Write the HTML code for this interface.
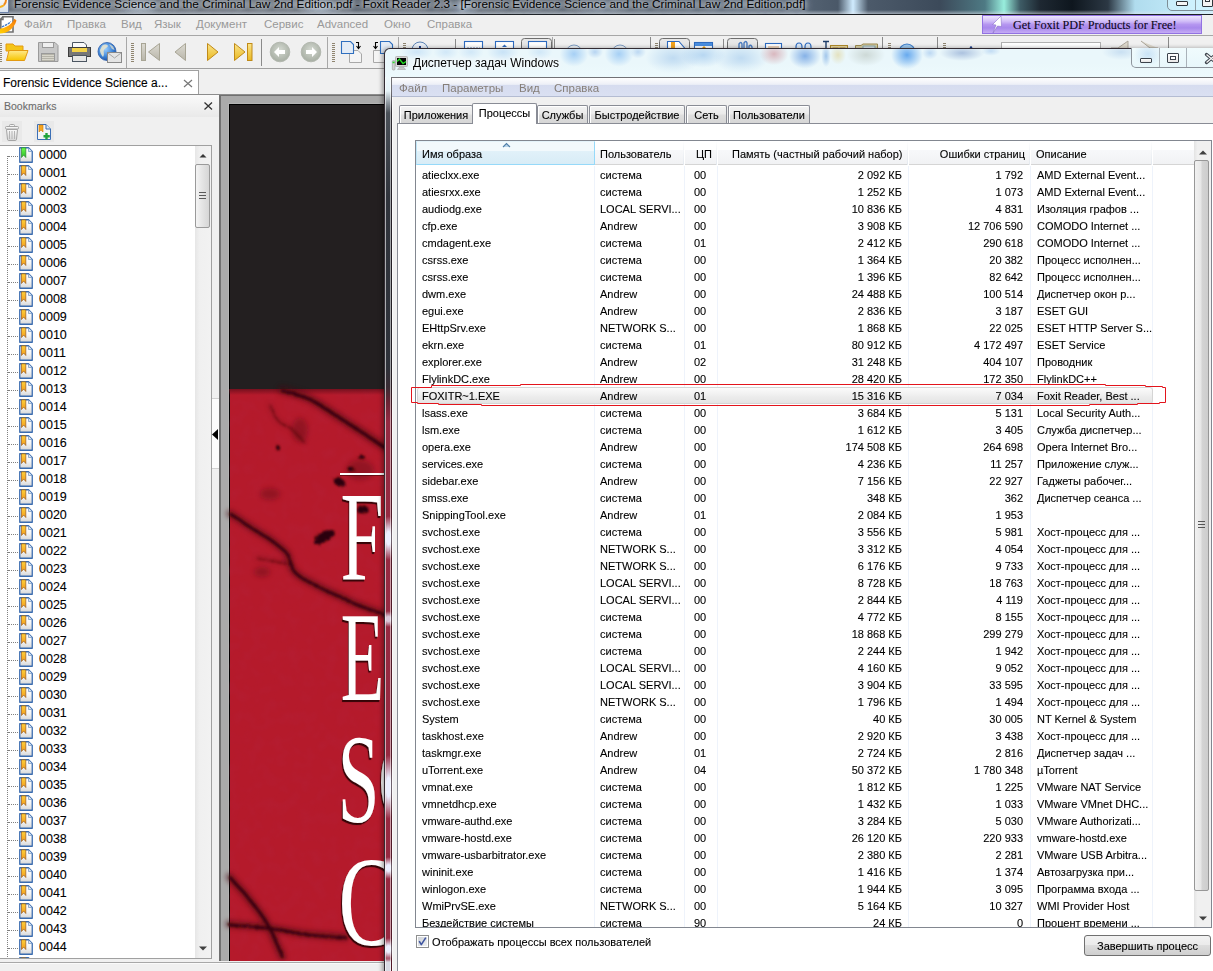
<!DOCTYPE html>
<html><head><meta charset="utf-8">
<style>
*{margin:0;padding:0;box-sizing:border-box}
html,body{width:1213px;height:971px;overflow:hidden;background:#f0f0f0;font-family:"Liberation Sans",sans-serif;color:#000}
.a{position:absolute}
.t{position:absolute;white-space:pre;line-height:1;-webkit-text-stroke:0.1px currentColor}
svg{position:absolute;overflow:visible}
</style></head><body>
<div class="a" style="left:0;top:0;width:1213px;height:15px;background:linear-gradient(90deg,#666e78 0.00%,#5e6670 24.73%,#56606c 49.46%,#566474 65.95%,#4a5868 69.08%,#d0ecff 70.32%,#4c5a6a 71.56%,#3c4a5a 77.49%,#4e7a84 81.20%,#98eedd 82.77%,#3e5c66 84.09%,#1e2832 85.74%,#0e161e 88.38%,#2c3844 91.34%,#b0dcee 93.57%,#cdf2ff 100.00%)"></div><div class="a" style="left:100px;top:-6px;width:80px;height:26px;background:radial-gradient(ellipse 24.0px 10px at center,rgba(215,235,255,.55),transparent)"></div><div class="a" style="left:280px;top:-6px;width:80px;height:26px;background:radial-gradient(ellipse 24.0px 10px at center,rgba(215,235,255,.6),transparent)"></div><div class="a" style="left:433px;top:-6px;width:60px;height:26px;background:radial-gradient(ellipse 18.0px 10px at center,rgba(200,225,250,.5),transparent)"></div><div class="a" style="left:550px;top:-6px;width:100px;height:26px;background:radial-gradient(ellipse 30.0px 10px at center,rgba(190,210,230,.35),transparent)"></div><div class="a" style="left:0;top:10px;width:1213px;height:4px;background:linear-gradient(180deg,rgba(255,255,255,0),rgba(225,232,240,.55))"></div><div class="a" style="left:0;top:14px;width:1213px;height:1px;background:#1c2024"></div><div class="a" style="left:0;top:0;width:9px;height:13px;background:linear-gradient(#f7f7f7,#d9e2ee);border-right:1px solid #6d82a8;border-bottom:1px solid #6d82a8"></div><div class="a" style="left:-2px;top:-4px;width:9px;height:12px;border-radius:0 0 8px 0;border-right:2px solid #f08a1c;border-bottom:2px solid #f5b020"></div><div class="a" style="left:1167px;top:-10px;width:60px;height:21px;border:1px solid #7e8e96;border-radius:0 0 0 5px;background:rgba(215,245,255,.5)"></div><div class="a" style="left:1195px;top:-10px;width:1px;height:20px;background:#8e9ea6"></div><div class="a" style="left:1176px;top:1px;width:12px;height:5px;border:1px solid #30363c;background:#f4f4f4;border-radius:1px"></div><div class="a" style="left:1202px;top:-4px;width:11px;height:11px;border:1px solid #30363c;background:#f4f4f4;border-radius:1px"></div><div class="a" style="left:1205px;top:-2px;width:5px;height:4px;border:1px solid #30363c"></div><div class="t" style="left:14px;top:-1px;font-size:11.8px;color:#000;-webkit-text-stroke:0;text-shadow:0 0 7px rgba(235,240,245,.9),0 0 4px rgba(235,240,245,.9),0 0 10px rgba(235,240,245,.7)">Forensic Evidence Science and the Criminal Law 2nd Edition.pdf - Foxit Reader 2.3 - [Forensic Evidence Science and the Criminal Law 2nd Edition.pdf]</div><div class="a" style="left:0;top:15px;width:1213px;height:20px;background:#f0f0f0"></div><svg style="left:0;top:15px" width="17" height="19" viewBox="0 15 17 19"><defs><linearGradient id="sw" x1="0" y1="1" x2="1" y2="0"><stop offset="0" stop-color="#ffd000"/><stop offset=".6" stop-color="#ff9a10"/><stop offset="1" stop-color="#f07800"/></linearGradient></defs><path d="M3 16.8 H13 V32 H0.8 V19 Z" fill="#fff" stroke="#727272" stroke-width="1.6"/><path d="M0 19.5 H3 V16" fill="none" stroke="#727272" stroke-width="1.4"/><path d="M0 33.5 C7 33.5 14 29 16.5 20.5 L14.5 18.8 C12 24 6.5 28 0 28.8 Z" fill="url(#sw)"/><path d="M2 26.8 C5 25.5 8 24.5 10.8 21.5" fill="none" stroke="#3c78c8" stroke-width="1.4" stroke-dasharray="2.5 .8"/></svg><div class="t" style="left:24px;top:19px;font-size:11.5px;color:#999;-webkit-text-stroke:0">Файл</div><div class="t" style="left:67px;top:19px;font-size:11.5px;color:#999;-webkit-text-stroke:0">Правка</div><div class="t" style="left:121px;top:19px;font-size:11.5px;color:#999;-webkit-text-stroke:0">Вид</div><div class="t" style="left:154px;top:19px;font-size:11.5px;color:#999;-webkit-text-stroke:0">Язык</div><div class="t" style="left:196px;top:19px;font-size:11.5px;color:#999;-webkit-text-stroke:0">Документ</div><div class="t" style="left:264px;top:19px;font-size:11.5px;color:#999;-webkit-text-stroke:0">Сервис</div><div class="t" style="left:317px;top:19px;font-size:11.5px;color:#999;-webkit-text-stroke:0">Advanced</div><div class="t" style="left:384px;top:19px;font-size:11.5px;color:#999;-webkit-text-stroke:0">Окно</div><div class="t" style="left:427px;top:19px;font-size:11.5px;color:#999;-webkit-text-stroke:0">Справка</div><div class="a" style="left:982px;top:15px;width:220px;height:19px;background:linear-gradient(180deg,#eee6fd 0%,#d2bff8 30%,#b596f0 50%,#a888ec 70%,#c4acf4 100%);border:1px solid #9272e2"></div><svg style="left:988px;top:15px" width="16" height="19"><path d="M13 1 L4.5 9.5 L8 10 L5 18 L9.5 11 L13.5 11.5 Z" fill="#fff" stroke="#7e64c0" stroke-width=".5"/></svg><div class="t" style="left:1013px;top:19px;font-family:'Liberation Serif',serif;font-size:12.2px;color:#0c0820">Get Foxit PDF Products for Free!</div><div class="a" style="left:0;top:35px;width:1213px;height:34px;background:#f0f0f0"></div><svg style="left:0;top:35px" width="1213" height="34" viewBox="0 35 1213 34"><defs><linearGradient id="gy" x1="0" y1="0" x2="0" y2="1"><stop offset="0" stop-color="#fbe48a"/><stop offset="1" stop-color="#e9b820"/></linearGradient><linearGradient id="gg" x1="0" y1="0" x2="0" y2="1"><stop offset="0" stop-color="#dcdad2"/><stop offset="1" stop-color="#b9b6aa"/></linearGradient><linearGradient id="gf" x1="0" y1="0" x2="0" y2="1"><stop offset="0" stop-color="#ffe98a"/><stop offset="1" stop-color="#f6c400"/></linearGradient><radialGradient id="gc" cx=".5" cy=".4" r=".6"><stop offset="0" stop-color="#d5dad2"/><stop offset="1" stop-color="#a6ada2"/></radialGradient><radialGradient id="gl" cx=".4" cy=".35" r=".7"><stop offset="0" stop-color="#9ed0ff"/><stop offset=".6" stop-color="#3f86d8"/><stop offset="1" stop-color="#1c4ea0"/></radialGradient><linearGradient id="pb" x1="0" y1="0" x2="0" y2="1"><stop offset="0" stop-color="#e9e9e9"/><stop offset="1" stop-color="#d2d2d2"/></linearGradient></defs><path d="M0 35.5 H1213" stroke="#a7a7a7"/><path d="M0 68.5 H1213" stroke="#a0a0a0"/><path d="M0 43.5 H2" stroke="#8f8570"/><path d="M0 45.5 H2" stroke="#8f8570"/><path d="M0 47.5 H2" stroke="#8f8570"/><path d="M0 49.5 H2" stroke="#8f8570"/><path d="M0 51.5 H2" stroke="#8f8570"/><path d="M0 53.5 H2" stroke="#8f8570"/><path d="M0 55.5 H2" stroke="#8f8570"/><path d="M0 57.5 H2" stroke="#8f8570"/><path d="M0 59.5 H2" stroke="#8f8570"/><path d="M0 61.5 H2" stroke="#8f8570"/><path d="M6 44 H13 L15 46 H23 V51 H6 Z" fill="#f5c518" stroke="#e39a12"/><path d="M6.5 60.5 L9 50.5 H28 L24.5 60.5 Z" fill="url(#gf)" stroke="#e39a12"/><path d="M38.5 42.5 H55 L58 45.5 V61.5 H38.5 Z" fill="#c8c8c8" stroke="#9a9a9a"/><rect x="42.5" y="42.5" width="11" height="5" fill="#efefef" stroke="#9a9a9a"/><rect x="41.5" y="53.5" width="13" height="8" fill="#b5b3a8" stroke="#9a9a9a"/><path d="M42 55.5 H54 M42 57.5 H54 M42 59.5 H54" stroke="#d8d6cc"/><path d="M72.5 42.5 H84 L86.5 45 V48.5 H72.5 Z" fill="#fafafa" stroke="#4c5662"/><rect x="68.5" y="47.5" width="22" height="9" fill="#777" stroke="#3e3e3e"/><rect x="72" y="48" width="15" height="4" fill="#f3d24a"/><rect x="72.5" y="55.5" width="14" height="6" fill="#e6e6e6" stroke="#4c5662"/><circle cx="107" cy="51.5" r="9" fill="url(#gl)" stroke="#2a5aa8" stroke-width=".8"/><path d="M102 46 C104 44 107 44 108 46 C107 48 105 48 104 50 C103 52 105 54 103 57 C101 55 100 52 100 50 Z" fill="#ece6cc" opacity=".85"/><path d="M109 44 C112 45 114 47 114.5 50 L112 49 Z" fill="#ece6cc" opacity=".7"/><rect x="107.5" y="52.5" width="14" height="10" fill="#e4e4e4" stroke="#8a8a8a"/><path d="M108 53 L114.5 58 L121 53" fill="none" stroke="#a8a8a8"/><path d="M126.5 37 V68" stroke="#a8a8a8"/><path d="M261.5 39 V66" stroke="#8a8a8a"/><path d="M327.5 37 V68" stroke="#a8a8a8"/><path d="M398.5 37 V68" stroke="#a8a8a8"/><path d="M455.5 39 V66" stroke="#8a8a8a"/><path d="M552.5 37 V68" stroke="#a8a8a8"/><path d="M554.5 39 V66" stroke="#8a8a8a"/><path d="M650.5 37 V68" stroke="#8a8a8a"/><path d="M723.5 39 V66" stroke="#8a8a8a"/><path d="M882.5 37 V68" stroke="#8a8a8a"/><path d="M937.5 37 V68" stroke="#8a8a8a"/><path d="M1168.5 37 V68" stroke="#8a8a8a"/><path d="M131 43.5 H134" stroke="#8f8570"/><path d="M131 45.5 H134" stroke="#8f8570"/><path d="M131 47.5 H134" stroke="#8f8570"/><path d="M131 49.5 H134" stroke="#8f8570"/><path d="M131 51.5 H134" stroke="#8f8570"/><path d="M131 53.5 H134" stroke="#8f8570"/><path d="M131 55.5 H134" stroke="#8f8570"/><path d="M131 57.5 H134" stroke="#8f8570"/><path d="M131 59.5 H134" stroke="#8f8570"/><path d="M131 61.5 H134" stroke="#8f8570"/><path d="M332 43.5 H335" stroke="#8f8570"/><path d="M332 45.5 H335" stroke="#8f8570"/><path d="M332 47.5 H335" stroke="#8f8570"/><path d="M332 49.5 H335" stroke="#8f8570"/><path d="M332 51.5 H335" stroke="#8f8570"/><path d="M332 53.5 H335" stroke="#8f8570"/><path d="M332 55.5 H335" stroke="#8f8570"/><path d="M332 57.5 H335" stroke="#8f8570"/><path d="M332 59.5 H335" stroke="#8f8570"/><path d="M332 61.5 H335" stroke="#8f8570"/><path d="M403 43.5 H406" stroke="#8f8570"/><path d="M403 45.5 H406" stroke="#8f8570"/><path d="M403 47.5 H406" stroke="#8f8570"/><path d="M403 49.5 H406" stroke="#8f8570"/><path d="M403 51.5 H406" stroke="#8f8570"/><path d="M403 53.5 H406" stroke="#8f8570"/><path d="M403 55.5 H406" stroke="#8f8570"/><path d="M403 57.5 H406" stroke="#8f8570"/><path d="M403 59.5 H406" stroke="#8f8570"/><path d="M403 61.5 H406" stroke="#8f8570"/><path d="M655 43.5 H658" stroke="#8f8570"/><path d="M655 45.5 H658" stroke="#8f8570"/><path d="M655 47.5 H658" stroke="#8f8570"/><path d="M655 49.5 H658" stroke="#8f8570"/><path d="M655 51.5 H658" stroke="#8f8570"/><path d="M655 53.5 H658" stroke="#8f8570"/><path d="M655 55.5 H658" stroke="#8f8570"/><path d="M655 57.5 H658" stroke="#8f8570"/><path d="M655 59.5 H658" stroke="#8f8570"/><path d="M655 61.5 H658" stroke="#8f8570"/><path d="M888 43.5 H891" stroke="#8f8570"/><path d="M888 45.5 H891" stroke="#8f8570"/><path d="M888 47.5 H891" stroke="#8f8570"/><path d="M888 49.5 H891" stroke="#8f8570"/><path d="M888 51.5 H891" stroke="#8f8570"/><path d="M888 53.5 H891" stroke="#8f8570"/><path d="M888 55.5 H891" stroke="#8f8570"/><path d="M888 57.5 H891" stroke="#8f8570"/><path d="M888 59.5 H891" stroke="#8f8570"/><path d="M888 61.5 H891" stroke="#8f8570"/><path d="M943 43.5 H946" stroke="#8f8570"/><path d="M943 45.5 H946" stroke="#8f8570"/><path d="M943 47.5 H946" stroke="#8f8570"/><path d="M943 49.5 H946" stroke="#8f8570"/><path d="M943 51.5 H946" stroke="#8f8570"/><path d="M943 53.5 H946" stroke="#8f8570"/><path d="M943 55.5 H946" stroke="#8f8570"/><path d="M943 57.5 H946" stroke="#8f8570"/><path d="M943 59.5 H946" stroke="#8f8570"/><path d="M943 61.5 H946" stroke="#8f8570"/><rect x="141.5" y="43.5" width="4" height="17" fill="url(#gg)" stroke="#a8a595"/><path d="M159.5 43.5 V60.5 L148.5 52 Z" fill="url(#gg)" stroke="#a8a595"/><path d="M185.5 43.5 V60.5 L175 52 Z" fill="url(#gg)" stroke="#a8a595"/><path d="M207.5 43.5 V60.5 L218 52 Z" fill="url(#gy)" stroke="#c08a18"/><path d="M234.5 43.5 V60.5 L245 52 Z" fill="url(#gy)" stroke="#c08a18"/><rect x="247.5" y="43.5" width="4.5" height="17" fill="url(#gy)" stroke="#c08a18"/><circle cx="280" cy="52" r="9.8" fill="url(#gc)" stroke="#b3b8af"/><path d="M274 52 L279 47 V50 H285 V54 H279 V57 Z" fill="#fff"/><circle cx="311" cy="52" r="9.8" fill="url(#gc)" stroke="#b3b8af"/><path d="M317 52 L312 47 V50 H306 V54 H312 V57 Z" fill="#fff"/><path d="M349.5 50.5 H358 L361.5 54 V62.5 H349.5 Z" fill="#f4f4f4" stroke="#a8a8a8"/><path d="M341.5 41.5 H350.5 L353.5 44.5 V53.5 H341.5 Z" fill="#e4ecf6" stroke="#2f6fbf" stroke-width="1.1"/><path d="M356 42.5 H358.5 V48 M356.5 46 L358.5 48.5 L360.5 46" fill="none" stroke="#000" stroke-width="1.1"/><path d="M373.5 50.5 H382 L385.5 54 V62.5 H373.5 Z" fill="#f4f4f4" stroke="#a8a8a8"/><path d="M380.5 41.5 H389.5 L392.5 44.5 V53.5 H380.5 Z" fill="#e4ecf6" stroke="#2f6fbf" stroke-width="1.1"/><path d="M378 42.5 H375.5 V48 M373.5 46 L375.5 48.5 L377.5 46" fill="none" stroke="#000" stroke-width="1.1"/><circle cx="420" cy="50" r="8" fill="#e8eef6" stroke="#5b82b4"/><rect x="419" y="46" width="2" height="3" fill="#1f3f8a"/><rect x="464.5" y="41.5" width="18" height="14" fill="#fff" stroke="#2e6bbf" stroke-width="1.1"/><path d="M467 48 H480" stroke="#6a8cc0" stroke-dasharray="2 1"/><rect x="495.5" y="41.5" width="18" height="14" fill="#fff" stroke="#2e6bbf" stroke-width="1.1"/><path d="M502 47 L504.5 44.5 L507 47 Z" fill="#2e6bbf"/><rect x="521.5" y="38.5" width="30" height="30" rx="3" fill="url(#pb)" stroke="#6e6e6e"/><rect x="659.5" y="38.5" width="30" height="30" rx="3" fill="url(#pb)" stroke="#6e6e6e"/><rect x="727.5" y="38.5" width="30" height="30" rx="3" fill="url(#pb)" stroke="#6e6e6e"/><rect x="528.5" y="41.5" width="18" height="14" fill="#fff" stroke="#2e6bbf" stroke-width="1.1"/><circle cx="574" cy="53" r="8" fill="#eef2f6" stroke="#7d9cc2"/><circle cx="620" cy="53" r="8" fill="#eef2f6" stroke="#7d9cc2"/><path d="M667.5 41.5 H679 L684.5 48 V56 H667.5 Z" fill="#fff" stroke="#2e6bbf" stroke-width="1.1"/><rect x="671" y="42" width="4" height="12" fill="#f2a11d"/><rect x="694.5" y="42.5" width="18" height="13" fill="#fff" stroke="#2e6bbf" stroke-width="1.1"/><rect x="695" y="43" width="17" height="3" fill="#4a8ee0"/><path d="M702 48 L704 46 L706 48 Z" fill="#e39a12"/><path d="M739 56 V44 Q741 41 742 44 V56 M744 56 V43 Q746 40 747 43 V56 M749 56 V46 Q751 44 752 47 V56" fill="none" stroke="#4b7cc0" stroke-width="1.4"/><rect x="765.5" y="43.5" width="16" height="11" fill="#fff" stroke="#2e6bbf" stroke-width="1.1"/><path d="M768 47 H779" stroke="#d9a77a"/><path d="M796 55 V47 Q796 43 799 43 Q802 43 802 47 V55 M805 55 V47 Q805 43 808 43 Q811 43 811 47 V55" fill="#dce8f6" stroke="#2e6bbf" stroke-width="1.2"/><path d="M823 41.5 H829 M826 41.5 V56" stroke="#1f3e6a" stroke-width="1.4"/><rect x="830.5" y="45.5" width="17" height="11" fill="#e8d8a4" stroke="#b08a2a"/><rect x="833" y="48" width="5" height="5" fill="none" stroke="#b08a2a"/><rect x="840" y="48" width="5" height="5" fill="none" stroke="#b08a2a"/><path d="M855.5 45.5 H861 L863 44 H877.5 V56 H855.5 Z" fill="#d8cfa8" stroke="#9c8a4e"/><rect x="863" y="46" width="12" height="7" fill="#dde4ec" stroke="#8aa"/><circle cx="907" cy="52" r="8" fill="#9cc8ee" stroke="#3d7cc8" stroke-width="1.2"/><circle cx="971" cy="47.5" r="1.2" fill="#1f3f8a"/><rect x="1001.5" y="42.5" width="99" height="20" fill="#fff" stroke="#b0b0b0"/><path d="M1111 48 H1118 L1128 41 V48" fill="#ddd8cc" stroke="#aaa59a"/><path d="M1141 41 L1150 48 H1158" fill="#ddd8cc" stroke="#aaa59a"/></svg><div class="a" style="left:0;top:69px;width:1213px;height:26px;background:#f0f0f0"></div><div class="a" style="left:-1px;top:70px;width:200px;height:25px;background:#fff;border:1px solid #a0a0a0;border-bottom:none"></div><div class="a" style="left:0;top:94px;width:1213px;height:1px;background:#8c8c8c"></div><div class="t" style="left:3px;top:77px;font-size:12px;color:#000">Forensic Evidence Science a...</div><svg style="left:183px;top:79px" width="10" height="9"><path d="M1 1 L9 8 M9 1 L1 8" stroke="#777" stroke-width="1.2"/></svg><div class="a" style="left:0;top:95px;width:220px;height:866px;background:#f0f0f0"></div><div class="a" style="left:0;top:95px;width:219px;height:22px;background:linear-gradient(#fafafa,#e9e9e9)"></div><div class="t" style="left:4px;top:101px;font-size:10.5px;color:#6d6d6d">Bookmarks</div><svg style="left:204px;top:102px" width="9" height="8"><path d="M.5 .5 L8 7.5 M8 .5 L.5 7.5" stroke="#333" stroke-width="1.3"/></svg><div class="a" style="left:2px;top:121px;width:20px;height:21px;background:#e9e9e9"></div><svg style="left:0;top:118px" width="24" height="26" viewBox="0 118 24 26"><defs><linearGradient id="tb" x1="0" y1="0" x2="0" y2="1"><stop offset="0" stop-color="#fafafa"/><stop offset="1" stop-color="#d4d4d4"/></linearGradient></defs><rect x="9.5" y="124.5" width="5" height="2.5" rx="1" fill="#f4f4f4" stroke="#a4a4a4"/><rect x="5.5" y="126.5" width="13" height="2.5" rx="1" fill="#f4f4f4" stroke="#a4a4a4"/><path d="M6.5 129.5 L7.5 139.5 Q7.7 140.5 8.7 140.5 H15.3 Q16.3 140.5 16.5 139.5 L17.5 129.5 Z" fill="url(#tb)" stroke="#a4a4a4"/><path d="M9.5 131 V139 M12 131 V139 M14.5 131 V139" stroke="#b4b4b4"/></svg><div class="a" style="left:34px;top:121px;width:20px;height:21px;background:#e9e9e9"></div><svg style="left:37px;top:124px" width="15" height="17"><path d="M.5 .5 H9 L13.5 5 V15.5 H.5 Z" fill="#f4f4f4" stroke="#3b6fb6"/><path d="M9 .5 V5 H13.5" fill="#dfe9f6" stroke="#3b6fb6"/><path d="M2 1 H6 V8 L4 6 L2 8 Z" fill="#f5a623" stroke="#d27c0c" stroke-width=".6"/><path d="M9.5 9 V15.5 M6.5 12.2 H12.8" stroke="#22a33b" stroke-width="2.4"/></svg><div class="a" style="left:0;top:145px;width:212px;height:814px;background:#fff;border:1px solid #a0a0a0;border-left:none"></div><div class="a" style="left:195px;top:146px;width:16px;height:812px;background:linear-gradient(90deg,#e6e6e6,#f0f0f0 30%,#f2f2f2)"></div><svg style="left:199px;top:153px" width="8" height="5"><path d="M.5 4.5 L4 1 L7.5 4.5 Z" fill="#383838"/></svg><svg style="left:199px;top:946px" width="8" height="5"><path d="M0 .5 L4 4.5 L8 .5 Z" fill="#404040"/></svg><div class="a" style="left:195px;top:164px;width:15px;height:64px;border:1px solid #9a9a9a;border-radius:2px;background:linear-gradient(90deg,#f4f4f4,#e4e4e4 50%,#d6d6d6)"></div><svg style="left:199px;top:192px" width="8" height="7"><path d="M0 .5 H7 M0 3.5 H7 M0 6.5 H7" stroke="#5a5a5a"/></svg><div class="a" style="left:0;top:146px;width:195px;height:812px;overflow:hidden"><div class="a" style="left:0;top:-146px;width:195px;height:1000px"><div class="t" style="left:39px;top:149px;font-size:12.5px;color:#000">0000</div><div class="t" style="left:39px;top:167px;font-size:12.5px;color:#000">0001</div><div class="t" style="left:39px;top:185px;font-size:12.5px;color:#000">0002</div><div class="t" style="left:39px;top:203px;font-size:12.5px;color:#000">0003</div><div class="t" style="left:39px;top:221px;font-size:12.5px;color:#000">0004</div><div class="t" style="left:39px;top:239px;font-size:12.5px;color:#000">0005</div><div class="t" style="left:39px;top:257px;font-size:12.5px;color:#000">0006</div><div class="t" style="left:39px;top:275px;font-size:12.5px;color:#000">0007</div><div class="t" style="left:39px;top:293px;font-size:12.5px;color:#000">0008</div><div class="t" style="left:39px;top:311px;font-size:12.5px;color:#000">0009</div><div class="t" style="left:39px;top:329px;font-size:12.5px;color:#000">0010</div><div class="t" style="left:39px;top:347px;font-size:12.5px;color:#000">0011</div><div class="t" style="left:39px;top:365px;font-size:12.5px;color:#000">0012</div><div class="t" style="left:39px;top:383px;font-size:12.5px;color:#000">0013</div><div class="t" style="left:39px;top:401px;font-size:12.5px;color:#000">0014</div><div class="t" style="left:39px;top:419px;font-size:12.5px;color:#000">0015</div><div class="t" style="left:39px;top:437px;font-size:12.5px;color:#000">0016</div><div class="t" style="left:39px;top:455px;font-size:12.5px;color:#000">0017</div><div class="t" style="left:39px;top:473px;font-size:12.5px;color:#000">0018</div><div class="t" style="left:39px;top:491px;font-size:12.5px;color:#000">0019</div><div class="t" style="left:39px;top:509px;font-size:12.5px;color:#000">0020</div><div class="t" style="left:39px;top:527px;font-size:12.5px;color:#000">0021</div><div class="t" style="left:39px;top:545px;font-size:12.5px;color:#000">0022</div><div class="t" style="left:39px;top:563px;font-size:12.5px;color:#000">0023</div><div class="t" style="left:39px;top:581px;font-size:12.5px;color:#000">0024</div><div class="t" style="left:39px;top:599px;font-size:12.5px;color:#000">0025</div><div class="t" style="left:39px;top:617px;font-size:12.5px;color:#000">0026</div><div class="t" style="left:39px;top:635px;font-size:12.5px;color:#000">0027</div><div class="t" style="left:39px;top:653px;font-size:12.5px;color:#000">0028</div><div class="t" style="left:39px;top:671px;font-size:12.5px;color:#000">0029</div><div class="t" style="left:39px;top:689px;font-size:12.5px;color:#000">0030</div><div class="t" style="left:39px;top:707px;font-size:12.5px;color:#000">0031</div><div class="t" style="left:39px;top:725px;font-size:12.5px;color:#000">0032</div><div class="t" style="left:39px;top:743px;font-size:12.5px;color:#000">0033</div><div class="t" style="left:39px;top:761px;font-size:12.5px;color:#000">0034</div><div class="t" style="left:39px;top:779px;font-size:12.5px;color:#000">0035</div><div class="t" style="left:39px;top:797px;font-size:12.5px;color:#000">0036</div><div class="t" style="left:39px;top:815px;font-size:12.5px;color:#000">0037</div><div class="t" style="left:39px;top:833px;font-size:12.5px;color:#000">0038</div><div class="t" style="left:39px;top:851px;font-size:12.5px;color:#000">0039</div><div class="t" style="left:39px;top:869px;font-size:12.5px;color:#000">0040</div><div class="t" style="left:39px;top:887px;font-size:12.5px;color:#000">0041</div><div class="t" style="left:39px;top:905px;font-size:12.5px;color:#000">0042</div><div class="t" style="left:39px;top:923px;font-size:12.5px;color:#000">0043</div><div class="t" style="left:39px;top:941px;font-size:12.5px;color:#000">0044</div><div class="t" style="left:39px;top:959px;font-size:12.5px;color:#000">0045</div><div class="a" style="left:7px;top:156px;width:0;height:803px;border-left:1px dotted #808080"></div><svg style="left:0;top:0" width="0" height="0"><defs><linearGradient id="pg" x1="0" y1="0" x2="0" y2="1"><stop offset="0" stop-color="#fff"/><stop offset=".5" stop-color="#f6f6f6"/><stop offset="1" stop-color="#d6d6d6"/></linearGradient><linearGradient id="fo" x1="0" y1="0" x2="0" y2="1"><stop offset="0" stop-color="#ffd23a"/><stop offset="1" stop-color="#f39a1a"/></linearGradient><linearGradient id="fg" x1="0" y1="0" x2="0" y2="1"><stop offset="0" stop-color="#6cff4a"/><stop offset="1" stop-color="#2cb82c"/></linearGradient></defs></svg><div class="a" style="left:8px;top:156px;width:10px;height:0;border-top:1px dotted #808080"></div><svg style="left:19px;top:147px" width="15" height="16"><path d="M.75 .75 H9.5 L13.25 4.5 V15.25 H.75 Z" fill="url(#pg)" stroke="#3a6cb0" stroke-width="1.3" stroke-linejoin="round"/><path d="M9.5 1 V4.5 H13" fill="#dfe8f4" stroke="#7a9cc8" stroke-width=".8"/><path d="M2.5 .8 H6.8 V10.5 L4.65 8 L2.5 10.5 Z" fill="url(#fg)" stroke="#2a8a2a" stroke-width=".7"/></svg><div class="a" style="left:8px;top:174px;width:10px;height:0;border-top:1px dotted #808080"></div><svg style="left:19px;top:165px" width="15" height="16"><path d="M.75 .75 H9.5 L13.25 4.5 V15.25 H.75 Z" fill="url(#pg)" stroke="#3a6cb0" stroke-width="1.3" stroke-linejoin="round"/><path d="M9.5 1 V4.5 H13" fill="#dfe8f4" stroke="#7a9cc8" stroke-width=".8"/><path d="M2.5 .8 H6.8 V10.5 L4.65 8 L2.5 10.5 Z" fill="url(#fo)" stroke="#9a5a18" stroke-width=".7"/></svg><div class="a" style="left:8px;top:192px;width:10px;height:0;border-top:1px dotted #808080"></div><svg style="left:19px;top:183px" width="15" height="16"><path d="M.75 .75 H9.5 L13.25 4.5 V15.25 H.75 Z" fill="url(#pg)" stroke="#3a6cb0" stroke-width="1.3" stroke-linejoin="round"/><path d="M9.5 1 V4.5 H13" fill="#dfe8f4" stroke="#7a9cc8" stroke-width=".8"/><path d="M2.5 .8 H6.8 V10.5 L4.65 8 L2.5 10.5 Z" fill="url(#fo)" stroke="#9a5a18" stroke-width=".7"/></svg><div class="a" style="left:8px;top:210px;width:10px;height:0;border-top:1px dotted #808080"></div><svg style="left:19px;top:201px" width="15" height="16"><path d="M.75 .75 H9.5 L13.25 4.5 V15.25 H.75 Z" fill="url(#pg)" stroke="#3a6cb0" stroke-width="1.3" stroke-linejoin="round"/><path d="M9.5 1 V4.5 H13" fill="#dfe8f4" stroke="#7a9cc8" stroke-width=".8"/><path d="M2.5 .8 H6.8 V10.5 L4.65 8 L2.5 10.5 Z" fill="url(#fo)" stroke="#9a5a18" stroke-width=".7"/></svg><div class="a" style="left:8px;top:228px;width:10px;height:0;border-top:1px dotted #808080"></div><svg style="left:19px;top:219px" width="15" height="16"><path d="M.75 .75 H9.5 L13.25 4.5 V15.25 H.75 Z" fill="url(#pg)" stroke="#3a6cb0" stroke-width="1.3" stroke-linejoin="round"/><path d="M9.5 1 V4.5 H13" fill="#dfe8f4" stroke="#7a9cc8" stroke-width=".8"/><path d="M2.5 .8 H6.8 V10.5 L4.65 8 L2.5 10.5 Z" fill="url(#fo)" stroke="#9a5a18" stroke-width=".7"/></svg><div class="a" style="left:8px;top:246px;width:10px;height:0;border-top:1px dotted #808080"></div><svg style="left:19px;top:237px" width="15" height="16"><path d="M.75 .75 H9.5 L13.25 4.5 V15.25 H.75 Z" fill="url(#pg)" stroke="#3a6cb0" stroke-width="1.3" stroke-linejoin="round"/><path d="M9.5 1 V4.5 H13" fill="#dfe8f4" stroke="#7a9cc8" stroke-width=".8"/><path d="M2.5 .8 H6.8 V10.5 L4.65 8 L2.5 10.5 Z" fill="url(#fo)" stroke="#9a5a18" stroke-width=".7"/></svg><div class="a" style="left:8px;top:264px;width:10px;height:0;border-top:1px dotted #808080"></div><svg style="left:19px;top:255px" width="15" height="16"><path d="M.75 .75 H9.5 L13.25 4.5 V15.25 H.75 Z" fill="url(#pg)" stroke="#3a6cb0" stroke-width="1.3" stroke-linejoin="round"/><path d="M9.5 1 V4.5 H13" fill="#dfe8f4" stroke="#7a9cc8" stroke-width=".8"/><path d="M2.5 .8 H6.8 V10.5 L4.65 8 L2.5 10.5 Z" fill="url(#fo)" stroke="#9a5a18" stroke-width=".7"/></svg><div class="a" style="left:8px;top:282px;width:10px;height:0;border-top:1px dotted #808080"></div><svg style="left:19px;top:273px" width="15" height="16"><path d="M.75 .75 H9.5 L13.25 4.5 V15.25 H.75 Z" fill="url(#pg)" stroke="#3a6cb0" stroke-width="1.3" stroke-linejoin="round"/><path d="M9.5 1 V4.5 H13" fill="#dfe8f4" stroke="#7a9cc8" stroke-width=".8"/><path d="M2.5 .8 H6.8 V10.5 L4.65 8 L2.5 10.5 Z" fill="url(#fo)" stroke="#9a5a18" stroke-width=".7"/></svg><div class="a" style="left:8px;top:300px;width:10px;height:0;border-top:1px dotted #808080"></div><svg style="left:19px;top:291px" width="15" height="16"><path d="M.75 .75 H9.5 L13.25 4.5 V15.25 H.75 Z" fill="url(#pg)" stroke="#3a6cb0" stroke-width="1.3" stroke-linejoin="round"/><path d="M9.5 1 V4.5 H13" fill="#dfe8f4" stroke="#7a9cc8" stroke-width=".8"/><path d="M2.5 .8 H6.8 V10.5 L4.65 8 L2.5 10.5 Z" fill="url(#fo)" stroke="#9a5a18" stroke-width=".7"/></svg><div class="a" style="left:8px;top:318px;width:10px;height:0;border-top:1px dotted #808080"></div><svg style="left:19px;top:309px" width="15" height="16"><path d="M.75 .75 H9.5 L13.25 4.5 V15.25 H.75 Z" fill="url(#pg)" stroke="#3a6cb0" stroke-width="1.3" stroke-linejoin="round"/><path d="M9.5 1 V4.5 H13" fill="#dfe8f4" stroke="#7a9cc8" stroke-width=".8"/><path d="M2.5 .8 H6.8 V10.5 L4.65 8 L2.5 10.5 Z" fill="url(#fo)" stroke="#9a5a18" stroke-width=".7"/></svg><div class="a" style="left:8px;top:336px;width:10px;height:0;border-top:1px dotted #808080"></div><svg style="left:19px;top:327px" width="15" height="16"><path d="M.75 .75 H9.5 L13.25 4.5 V15.25 H.75 Z" fill="url(#pg)" stroke="#3a6cb0" stroke-width="1.3" stroke-linejoin="round"/><path d="M9.5 1 V4.5 H13" fill="#dfe8f4" stroke="#7a9cc8" stroke-width=".8"/><path d="M2.5 .8 H6.8 V10.5 L4.65 8 L2.5 10.5 Z" fill="url(#fo)" stroke="#9a5a18" stroke-width=".7"/></svg><div class="a" style="left:8px;top:354px;width:10px;height:0;border-top:1px dotted #808080"></div><svg style="left:19px;top:345px" width="15" height="16"><path d="M.75 .75 H9.5 L13.25 4.5 V15.25 H.75 Z" fill="url(#pg)" stroke="#3a6cb0" stroke-width="1.3" stroke-linejoin="round"/><path d="M9.5 1 V4.5 H13" fill="#dfe8f4" stroke="#7a9cc8" stroke-width=".8"/><path d="M2.5 .8 H6.8 V10.5 L4.65 8 L2.5 10.5 Z" fill="url(#fo)" stroke="#9a5a18" stroke-width=".7"/></svg><div class="a" style="left:8px;top:372px;width:10px;height:0;border-top:1px dotted #808080"></div><svg style="left:19px;top:363px" width="15" height="16"><path d="M.75 .75 H9.5 L13.25 4.5 V15.25 H.75 Z" fill="url(#pg)" stroke="#3a6cb0" stroke-width="1.3" stroke-linejoin="round"/><path d="M9.5 1 V4.5 H13" fill="#dfe8f4" stroke="#7a9cc8" stroke-width=".8"/><path d="M2.5 .8 H6.8 V10.5 L4.65 8 L2.5 10.5 Z" fill="url(#fo)" stroke="#9a5a18" stroke-width=".7"/></svg><div class="a" style="left:8px;top:390px;width:10px;height:0;border-top:1px dotted #808080"></div><svg style="left:19px;top:381px" width="15" height="16"><path d="M.75 .75 H9.5 L13.25 4.5 V15.25 H.75 Z" fill="url(#pg)" stroke="#3a6cb0" stroke-width="1.3" stroke-linejoin="round"/><path d="M9.5 1 V4.5 H13" fill="#dfe8f4" stroke="#7a9cc8" stroke-width=".8"/><path d="M2.5 .8 H6.8 V10.5 L4.65 8 L2.5 10.5 Z" fill="url(#fo)" stroke="#9a5a18" stroke-width=".7"/></svg><div class="a" style="left:8px;top:408px;width:10px;height:0;border-top:1px dotted #808080"></div><svg style="left:19px;top:399px" width="15" height="16"><path d="M.75 .75 H9.5 L13.25 4.5 V15.25 H.75 Z" fill="url(#pg)" stroke="#3a6cb0" stroke-width="1.3" stroke-linejoin="round"/><path d="M9.5 1 V4.5 H13" fill="#dfe8f4" stroke="#7a9cc8" stroke-width=".8"/><path d="M2.5 .8 H6.8 V10.5 L4.65 8 L2.5 10.5 Z" fill="url(#fo)" stroke="#9a5a18" stroke-width=".7"/></svg><div class="a" style="left:8px;top:426px;width:10px;height:0;border-top:1px dotted #808080"></div><svg style="left:19px;top:417px" width="15" height="16"><path d="M.75 .75 H9.5 L13.25 4.5 V15.25 H.75 Z" fill="url(#pg)" stroke="#3a6cb0" stroke-width="1.3" stroke-linejoin="round"/><path d="M9.5 1 V4.5 H13" fill="#dfe8f4" stroke="#7a9cc8" stroke-width=".8"/><path d="M2.5 .8 H6.8 V10.5 L4.65 8 L2.5 10.5 Z" fill="url(#fo)" stroke="#9a5a18" stroke-width=".7"/></svg><div class="a" style="left:8px;top:444px;width:10px;height:0;border-top:1px dotted #808080"></div><svg style="left:19px;top:435px" width="15" height="16"><path d="M.75 .75 H9.5 L13.25 4.5 V15.25 H.75 Z" fill="url(#pg)" stroke="#3a6cb0" stroke-width="1.3" stroke-linejoin="round"/><path d="M9.5 1 V4.5 H13" fill="#dfe8f4" stroke="#7a9cc8" stroke-width=".8"/><path d="M2.5 .8 H6.8 V10.5 L4.65 8 L2.5 10.5 Z" fill="url(#fo)" stroke="#9a5a18" stroke-width=".7"/></svg><div class="a" style="left:8px;top:462px;width:10px;height:0;border-top:1px dotted #808080"></div><svg style="left:19px;top:453px" width="15" height="16"><path d="M.75 .75 H9.5 L13.25 4.5 V15.25 H.75 Z" fill="url(#pg)" stroke="#3a6cb0" stroke-width="1.3" stroke-linejoin="round"/><path d="M9.5 1 V4.5 H13" fill="#dfe8f4" stroke="#7a9cc8" stroke-width=".8"/><path d="M2.5 .8 H6.8 V10.5 L4.65 8 L2.5 10.5 Z" fill="url(#fo)" stroke="#9a5a18" stroke-width=".7"/></svg><div class="a" style="left:8px;top:480px;width:10px;height:0;border-top:1px dotted #808080"></div><svg style="left:19px;top:471px" width="15" height="16"><path d="M.75 .75 H9.5 L13.25 4.5 V15.25 H.75 Z" fill="url(#pg)" stroke="#3a6cb0" stroke-width="1.3" stroke-linejoin="round"/><path d="M9.5 1 V4.5 H13" fill="#dfe8f4" stroke="#7a9cc8" stroke-width=".8"/><path d="M2.5 .8 H6.8 V10.5 L4.65 8 L2.5 10.5 Z" fill="url(#fo)" stroke="#9a5a18" stroke-width=".7"/></svg><div class="a" style="left:8px;top:498px;width:10px;height:0;border-top:1px dotted #808080"></div><svg style="left:19px;top:489px" width="15" height="16"><path d="M.75 .75 H9.5 L13.25 4.5 V15.25 H.75 Z" fill="url(#pg)" stroke="#3a6cb0" stroke-width="1.3" stroke-linejoin="round"/><path d="M9.5 1 V4.5 H13" fill="#dfe8f4" stroke="#7a9cc8" stroke-width=".8"/><path d="M2.5 .8 H6.8 V10.5 L4.65 8 L2.5 10.5 Z" fill="url(#fo)" stroke="#9a5a18" stroke-width=".7"/></svg><div class="a" style="left:8px;top:516px;width:10px;height:0;border-top:1px dotted #808080"></div><svg style="left:19px;top:507px" width="15" height="16"><path d="M.75 .75 H9.5 L13.25 4.5 V15.25 H.75 Z" fill="url(#pg)" stroke="#3a6cb0" stroke-width="1.3" stroke-linejoin="round"/><path d="M9.5 1 V4.5 H13" fill="#dfe8f4" stroke="#7a9cc8" stroke-width=".8"/><path d="M2.5 .8 H6.8 V10.5 L4.65 8 L2.5 10.5 Z" fill="url(#fo)" stroke="#9a5a18" stroke-width=".7"/></svg><div class="a" style="left:8px;top:534px;width:10px;height:0;border-top:1px dotted #808080"></div><svg style="left:19px;top:525px" width="15" height="16"><path d="M.75 .75 H9.5 L13.25 4.5 V15.25 H.75 Z" fill="url(#pg)" stroke="#3a6cb0" stroke-width="1.3" stroke-linejoin="round"/><path d="M9.5 1 V4.5 H13" fill="#dfe8f4" stroke="#7a9cc8" stroke-width=".8"/><path d="M2.5 .8 H6.8 V10.5 L4.65 8 L2.5 10.5 Z" fill="url(#fo)" stroke="#9a5a18" stroke-width=".7"/></svg><div class="a" style="left:8px;top:552px;width:10px;height:0;border-top:1px dotted #808080"></div><svg style="left:19px;top:543px" width="15" height="16"><path d="M.75 .75 H9.5 L13.25 4.5 V15.25 H.75 Z" fill="url(#pg)" stroke="#3a6cb0" stroke-width="1.3" stroke-linejoin="round"/><path d="M9.5 1 V4.5 H13" fill="#dfe8f4" stroke="#7a9cc8" stroke-width=".8"/><path d="M2.5 .8 H6.8 V10.5 L4.65 8 L2.5 10.5 Z" fill="url(#fo)" stroke="#9a5a18" stroke-width=".7"/></svg><div class="a" style="left:8px;top:570px;width:10px;height:0;border-top:1px dotted #808080"></div><svg style="left:19px;top:561px" width="15" height="16"><path d="M.75 .75 H9.5 L13.25 4.5 V15.25 H.75 Z" fill="url(#pg)" stroke="#3a6cb0" stroke-width="1.3" stroke-linejoin="round"/><path d="M9.5 1 V4.5 H13" fill="#dfe8f4" stroke="#7a9cc8" stroke-width=".8"/><path d="M2.5 .8 H6.8 V10.5 L4.65 8 L2.5 10.5 Z" fill="url(#fo)" stroke="#9a5a18" stroke-width=".7"/></svg><div class="a" style="left:8px;top:588px;width:10px;height:0;border-top:1px dotted #808080"></div><svg style="left:19px;top:579px" width="15" height="16"><path d="M.75 .75 H9.5 L13.25 4.5 V15.25 H.75 Z" fill="url(#pg)" stroke="#3a6cb0" stroke-width="1.3" stroke-linejoin="round"/><path d="M9.5 1 V4.5 H13" fill="#dfe8f4" stroke="#7a9cc8" stroke-width=".8"/><path d="M2.5 .8 H6.8 V10.5 L4.65 8 L2.5 10.5 Z" fill="url(#fo)" stroke="#9a5a18" stroke-width=".7"/></svg><div class="a" style="left:8px;top:606px;width:10px;height:0;border-top:1px dotted #808080"></div><svg style="left:19px;top:597px" width="15" height="16"><path d="M.75 .75 H9.5 L13.25 4.5 V15.25 H.75 Z" fill="url(#pg)" stroke="#3a6cb0" stroke-width="1.3" stroke-linejoin="round"/><path d="M9.5 1 V4.5 H13" fill="#dfe8f4" stroke="#7a9cc8" stroke-width=".8"/><path d="M2.5 .8 H6.8 V10.5 L4.65 8 L2.5 10.5 Z" fill="url(#fo)" stroke="#9a5a18" stroke-width=".7"/></svg><div class="a" style="left:8px;top:624px;width:10px;height:0;border-top:1px dotted #808080"></div><svg style="left:19px;top:615px" width="15" height="16"><path d="M.75 .75 H9.5 L13.25 4.5 V15.25 H.75 Z" fill="url(#pg)" stroke="#3a6cb0" stroke-width="1.3" stroke-linejoin="round"/><path d="M9.5 1 V4.5 H13" fill="#dfe8f4" stroke="#7a9cc8" stroke-width=".8"/><path d="M2.5 .8 H6.8 V10.5 L4.65 8 L2.5 10.5 Z" fill="url(#fo)" stroke="#9a5a18" stroke-width=".7"/></svg><div class="a" style="left:8px;top:642px;width:10px;height:0;border-top:1px dotted #808080"></div><svg style="left:19px;top:633px" width="15" height="16"><path d="M.75 .75 H9.5 L13.25 4.5 V15.25 H.75 Z" fill="url(#pg)" stroke="#3a6cb0" stroke-width="1.3" stroke-linejoin="round"/><path d="M9.5 1 V4.5 H13" fill="#dfe8f4" stroke="#7a9cc8" stroke-width=".8"/><path d="M2.5 .8 H6.8 V10.5 L4.65 8 L2.5 10.5 Z" fill="url(#fo)" stroke="#9a5a18" stroke-width=".7"/></svg><div class="a" style="left:8px;top:660px;width:10px;height:0;border-top:1px dotted #808080"></div><svg style="left:19px;top:651px" width="15" height="16"><path d="M.75 .75 H9.5 L13.25 4.5 V15.25 H.75 Z" fill="url(#pg)" stroke="#3a6cb0" stroke-width="1.3" stroke-linejoin="round"/><path d="M9.5 1 V4.5 H13" fill="#dfe8f4" stroke="#7a9cc8" stroke-width=".8"/><path d="M2.5 .8 H6.8 V10.5 L4.65 8 L2.5 10.5 Z" fill="url(#fo)" stroke="#9a5a18" stroke-width=".7"/></svg><div class="a" style="left:8px;top:678px;width:10px;height:0;border-top:1px dotted #808080"></div><svg style="left:19px;top:669px" width="15" height="16"><path d="M.75 .75 H9.5 L13.25 4.5 V15.25 H.75 Z" fill="url(#pg)" stroke="#3a6cb0" stroke-width="1.3" stroke-linejoin="round"/><path d="M9.5 1 V4.5 H13" fill="#dfe8f4" stroke="#7a9cc8" stroke-width=".8"/><path d="M2.5 .8 H6.8 V10.5 L4.65 8 L2.5 10.5 Z" fill="url(#fo)" stroke="#9a5a18" stroke-width=".7"/></svg><div class="a" style="left:8px;top:696px;width:10px;height:0;border-top:1px dotted #808080"></div><svg style="left:19px;top:687px" width="15" height="16"><path d="M.75 .75 H9.5 L13.25 4.5 V15.25 H.75 Z" fill="url(#pg)" stroke="#3a6cb0" stroke-width="1.3" stroke-linejoin="round"/><path d="M9.5 1 V4.5 H13" fill="#dfe8f4" stroke="#7a9cc8" stroke-width=".8"/><path d="M2.5 .8 H6.8 V10.5 L4.65 8 L2.5 10.5 Z" fill="url(#fo)" stroke="#9a5a18" stroke-width=".7"/></svg><div class="a" style="left:8px;top:714px;width:10px;height:0;border-top:1px dotted #808080"></div><svg style="left:19px;top:705px" width="15" height="16"><path d="M.75 .75 H9.5 L13.25 4.5 V15.25 H.75 Z" fill="url(#pg)" stroke="#3a6cb0" stroke-width="1.3" stroke-linejoin="round"/><path d="M9.5 1 V4.5 H13" fill="#dfe8f4" stroke="#7a9cc8" stroke-width=".8"/><path d="M2.5 .8 H6.8 V10.5 L4.65 8 L2.5 10.5 Z" fill="url(#fo)" stroke="#9a5a18" stroke-width=".7"/></svg><div class="a" style="left:8px;top:732px;width:10px;height:0;border-top:1px dotted #808080"></div><svg style="left:19px;top:723px" width="15" height="16"><path d="M.75 .75 H9.5 L13.25 4.5 V15.25 H.75 Z" fill="url(#pg)" stroke="#3a6cb0" stroke-width="1.3" stroke-linejoin="round"/><path d="M9.5 1 V4.5 H13" fill="#dfe8f4" stroke="#7a9cc8" stroke-width=".8"/><path d="M2.5 .8 H6.8 V10.5 L4.65 8 L2.5 10.5 Z" fill="url(#fo)" stroke="#9a5a18" stroke-width=".7"/></svg><div class="a" style="left:8px;top:750px;width:10px;height:0;border-top:1px dotted #808080"></div><svg style="left:19px;top:741px" width="15" height="16"><path d="M.75 .75 H9.5 L13.25 4.5 V15.25 H.75 Z" fill="url(#pg)" stroke="#3a6cb0" stroke-width="1.3" stroke-linejoin="round"/><path d="M9.5 1 V4.5 H13" fill="#dfe8f4" stroke="#7a9cc8" stroke-width=".8"/><path d="M2.5 .8 H6.8 V10.5 L4.65 8 L2.5 10.5 Z" fill="url(#fo)" stroke="#9a5a18" stroke-width=".7"/></svg><div class="a" style="left:8px;top:768px;width:10px;height:0;border-top:1px dotted #808080"></div><svg style="left:19px;top:759px" width="15" height="16"><path d="M.75 .75 H9.5 L13.25 4.5 V15.25 H.75 Z" fill="url(#pg)" stroke="#3a6cb0" stroke-width="1.3" stroke-linejoin="round"/><path d="M9.5 1 V4.5 H13" fill="#dfe8f4" stroke="#7a9cc8" stroke-width=".8"/><path d="M2.5 .8 H6.8 V10.5 L4.65 8 L2.5 10.5 Z" fill="url(#fo)" stroke="#9a5a18" stroke-width=".7"/></svg><div class="a" style="left:8px;top:786px;width:10px;height:0;border-top:1px dotted #808080"></div><svg style="left:19px;top:777px" width="15" height="16"><path d="M.75 .75 H9.5 L13.25 4.5 V15.25 H.75 Z" fill="url(#pg)" stroke="#3a6cb0" stroke-width="1.3" stroke-linejoin="round"/><path d="M9.5 1 V4.5 H13" fill="#dfe8f4" stroke="#7a9cc8" stroke-width=".8"/><path d="M2.5 .8 H6.8 V10.5 L4.65 8 L2.5 10.5 Z" fill="url(#fo)" stroke="#9a5a18" stroke-width=".7"/></svg><div class="a" style="left:8px;top:804px;width:10px;height:0;border-top:1px dotted #808080"></div><svg style="left:19px;top:795px" width="15" height="16"><path d="M.75 .75 H9.5 L13.25 4.5 V15.25 H.75 Z" fill="url(#pg)" stroke="#3a6cb0" stroke-width="1.3" stroke-linejoin="round"/><path d="M9.5 1 V4.5 H13" fill="#dfe8f4" stroke="#7a9cc8" stroke-width=".8"/><path d="M2.5 .8 H6.8 V10.5 L4.65 8 L2.5 10.5 Z" fill="url(#fo)" stroke="#9a5a18" stroke-width=".7"/></svg><div class="a" style="left:8px;top:822px;width:10px;height:0;border-top:1px dotted #808080"></div><svg style="left:19px;top:813px" width="15" height="16"><path d="M.75 .75 H9.5 L13.25 4.5 V15.25 H.75 Z" fill="url(#pg)" stroke="#3a6cb0" stroke-width="1.3" stroke-linejoin="round"/><path d="M9.5 1 V4.5 H13" fill="#dfe8f4" stroke="#7a9cc8" stroke-width=".8"/><path d="M2.5 .8 H6.8 V10.5 L4.65 8 L2.5 10.5 Z" fill="url(#fo)" stroke="#9a5a18" stroke-width=".7"/></svg><div class="a" style="left:8px;top:840px;width:10px;height:0;border-top:1px dotted #808080"></div><svg style="left:19px;top:831px" width="15" height="16"><path d="M.75 .75 H9.5 L13.25 4.5 V15.25 H.75 Z" fill="url(#pg)" stroke="#3a6cb0" stroke-width="1.3" stroke-linejoin="round"/><path d="M9.5 1 V4.5 H13" fill="#dfe8f4" stroke="#7a9cc8" stroke-width=".8"/><path d="M2.5 .8 H6.8 V10.5 L4.65 8 L2.5 10.5 Z" fill="url(#fo)" stroke="#9a5a18" stroke-width=".7"/></svg><div class="a" style="left:8px;top:858px;width:10px;height:0;border-top:1px dotted #808080"></div><svg style="left:19px;top:849px" width="15" height="16"><path d="M.75 .75 H9.5 L13.25 4.5 V15.25 H.75 Z" fill="url(#pg)" stroke="#3a6cb0" stroke-width="1.3" stroke-linejoin="round"/><path d="M9.5 1 V4.5 H13" fill="#dfe8f4" stroke="#7a9cc8" stroke-width=".8"/><path d="M2.5 .8 H6.8 V10.5 L4.65 8 L2.5 10.5 Z" fill="url(#fo)" stroke="#9a5a18" stroke-width=".7"/></svg><div class="a" style="left:8px;top:876px;width:10px;height:0;border-top:1px dotted #808080"></div><svg style="left:19px;top:867px" width="15" height="16"><path d="M.75 .75 H9.5 L13.25 4.5 V15.25 H.75 Z" fill="url(#pg)" stroke="#3a6cb0" stroke-width="1.3" stroke-linejoin="round"/><path d="M9.5 1 V4.5 H13" fill="#dfe8f4" stroke="#7a9cc8" stroke-width=".8"/><path d="M2.5 .8 H6.8 V10.5 L4.65 8 L2.5 10.5 Z" fill="url(#fo)" stroke="#9a5a18" stroke-width=".7"/></svg><div class="a" style="left:8px;top:894px;width:10px;height:0;border-top:1px dotted #808080"></div><svg style="left:19px;top:885px" width="15" height="16"><path d="M.75 .75 H9.5 L13.25 4.5 V15.25 H.75 Z" fill="url(#pg)" stroke="#3a6cb0" stroke-width="1.3" stroke-linejoin="round"/><path d="M9.5 1 V4.5 H13" fill="#dfe8f4" stroke="#7a9cc8" stroke-width=".8"/><path d="M2.5 .8 H6.8 V10.5 L4.65 8 L2.5 10.5 Z" fill="url(#fo)" stroke="#9a5a18" stroke-width=".7"/></svg><div class="a" style="left:8px;top:912px;width:10px;height:0;border-top:1px dotted #808080"></div><svg style="left:19px;top:903px" width="15" height="16"><path d="M.75 .75 H9.5 L13.25 4.5 V15.25 H.75 Z" fill="url(#pg)" stroke="#3a6cb0" stroke-width="1.3" stroke-linejoin="round"/><path d="M9.5 1 V4.5 H13" fill="#dfe8f4" stroke="#7a9cc8" stroke-width=".8"/><path d="M2.5 .8 H6.8 V10.5 L4.65 8 L2.5 10.5 Z" fill="url(#fo)" stroke="#9a5a18" stroke-width=".7"/></svg><div class="a" style="left:8px;top:930px;width:10px;height:0;border-top:1px dotted #808080"></div><svg style="left:19px;top:921px" width="15" height="16"><path d="M.75 .75 H9.5 L13.25 4.5 V15.25 H.75 Z" fill="url(#pg)" stroke="#3a6cb0" stroke-width="1.3" stroke-linejoin="round"/><path d="M9.5 1 V4.5 H13" fill="#dfe8f4" stroke="#7a9cc8" stroke-width=".8"/><path d="M2.5 .8 H6.8 V10.5 L4.65 8 L2.5 10.5 Z" fill="url(#fo)" stroke="#9a5a18" stroke-width=".7"/></svg><div class="a" style="left:8px;top:948px;width:10px;height:0;border-top:1px dotted #808080"></div><svg style="left:19px;top:939px" width="15" height="16"><path d="M.75 .75 H9.5 L13.25 4.5 V15.25 H.75 Z" fill="url(#pg)" stroke="#3a6cb0" stroke-width="1.3" stroke-linejoin="round"/><path d="M9.5 1 V4.5 H13" fill="#dfe8f4" stroke="#7a9cc8" stroke-width=".8"/><path d="M2.5 .8 H6.8 V10.5 L4.65 8 L2.5 10.5 Z" fill="url(#fo)" stroke="#9a5a18" stroke-width=".7"/></svg><div class="a" style="left:8px;top:966px;width:10px;height:0;border-top:1px dotted #808080"></div><svg style="left:19px;top:957px" width="15" height="16"><path d="M.75 .75 H9.5 L13.25 4.5 V15.25 H.75 Z" fill="url(#pg)" stroke="#3a6cb0" stroke-width="1.3" stroke-linejoin="round"/><path d="M9.5 1 V4.5 H13" fill="#dfe8f4" stroke="#7a9cc8" stroke-width=".8"/><path d="M2.5 .8 H6.8 V10.5 L4.65 8 L2.5 10.5 Z" fill="url(#fo)" stroke="#9a5a18" stroke-width=".7"/></svg></div></div><div class="a" style="left:212px;top:398px;width:7px;height:71px;background:#fcfcfc;border-top:1px solid #d0d0d0;border-bottom:1px solid #d0d0d0"></div><svg style="left:212px;top:429px" width="7" height="11"><path d="M6 0 V11 L0 5.5 Z" fill="#000"/></svg><div class="a" style="left:219px;top:95px;width:200px;height:866px;background:#aaaaaa;border-left:2px solid #707070;border-top:1px solid #707070"></div><div class="a" style="left:228px;top:103px;width:200px;height:858px;background:#b4b4b4"></div><div class="a" style="left:229px;top:104px;width:200px;height:858px;background:#000"></div><div class="a" style="left:230px;top:105px;width:200px;height:284px;background:#231f20"></div><div class="a" style="left:230px;top:389px;width:200px;height:572px;background:#b51a2b"></div><svg style="left:229px;top:389px" width="160" height="572" viewBox="229 389 160 572"><defs><filter id="bl" x="-20%" y="-20%" width="140%" height="140%"><feTurbulence type="turbulence" baseFrequency="0.35" numOctaves="2" seed="7" result="n"/><feDisplacementMap in="SourceGraphic" in2="n" scale="3.5" result="d"/><feGaussianBlur in="d" stdDeviation="0.8"/></filter><filter id="bl2" x="-50%" y="-50%" width="200%" height="200%"><feGaussianBlur stdDeviation="2.5"/></filter>
<filter id="tx" x="0" y="0" width="100%" height="100%"><feTurbulence type="fractalNoise" baseFrequency="0.08" numOctaves="2" seed="3"/><feColorMatrix type="matrix" values="0 0 0 0 0.45  0 0 0 0 0.02  0 0 0 0 0.06  0 0 0 -1.2 0.75"/></filter></defs>
<rect x="229" y="389" width="160" height="572" filter="url(#tx)" opacity=".35"/>
<defs><linearGradient id="tg" x1="0" y1="0" x2="0" y2="1"><stop offset="0" stop-color="#5a0c18" stop-opacity=".7"/><stop offset="1" stop-color="#5a0c18" stop-opacity="0"/></linearGradient></defs><rect x="229" y="389" width="160" height="6" fill="url(#tg)"/>
<g filter="url(#bl2)" fill="#6a0a16" opacity=".45"><ellipse cx="270" cy="494" rx="10" ry="6"/><ellipse cx="262" cy="572" rx="8" ry="5"/><ellipse cx="300" cy="430" rx="8" ry="12"/><ellipse cx="360" cy="470" rx="14" ry="10"/></g>
<g filter="url(#bl2)" fill="none" stroke="#4a0812" opacity=".55" stroke-linecap="round" stroke-linejoin="round">
<path d="M282 390 C292 392 300 395 306.5 397.4 S322 406 331 412 S348 423 358 429.5 S375 441 386 448" stroke-width="8.3"/>
<path d="M269.5 404.8 C272 410 274 416 277 419.6 S285 425 289 427 S298 436 304 442" stroke-width="2.9" opacity=".55"/>
<path d="M230 513.5 C236 517 240 520 244.8 523.3 S258 532 264.5 535.7 S279 546 284.3 550.5 S289 562 291.7 567.8 S300 577 306.5 580.2 S322 589 331 592.5 S348 601 358.4 604.9 S375 611 386 615" stroke-width="7.3"/>
<path d="M257 558 C266 559 276 561 287 563" stroke-width="3.1" opacity=".6"/>
<path d="M229.7 877 C235 884 240 888 243.9 892.7 S252 903 256.4 908.4 S265 920 269 927.3 S277 946 282 956" stroke-width="7.8"/>
<path d="M229 924 C240 925 252 926 265.9 927.3 S290 932 303.6 933.6 S330 936 345 937" stroke-width="7.3"/>
</g><g filter="url(#bl)" fill="none" stroke="#3a060c" stroke-linecap="round" stroke-linejoin="round">
<path d="M282 390 C292 392 300 395 306.5 397.4 S322 406 331 412 S348 423 358 429.5 S375 441 386 448" stroke-width="3.2"/>
<path d="M269.5 404.8 C272 410 274 416 277 419.6 S285 425 289 427 S298 436 304 442" stroke-width="1.1" opacity=".55"/>
<path d="M230 513.5 C236 517 240 520 244.8 523.3 S258 532 264.5 535.7 S279 546 284.3 550.5 S289 562 291.7 567.8 S300 577 306.5 580.2 S322 589 331 592.5 S348 601 358.4 604.9 S375 611 386 615" stroke-width="2.8"/>
<path d="M257 558 C266 559 276 561 287 563" stroke-width="1.2" opacity=".6"/>
<path d="M229.7 877 C235 884 240 888 243.9 892.7 S252 903 256.4 908.4 S265 920 269 927.3 S277 946 282 956" stroke-width="3"/>
<path d="M229 924 C240 925 252 926 265.9 927.3 S290 932 303.6 933.6 S330 936 345 937" stroke-width="2.8"/>
</g>
<g filter="url(#bl)" fill="#2a0508"><ellipse cx="338.6" cy="481.3" rx="6" ry="4" transform="rotate(20 338.6 481.3)"/><ellipse cx="324" cy="535.7" rx="11" ry="5" transform="rotate(-28 324 535.7)"/><ellipse cx="317" cy="541" rx="4" ry="3"/><ellipse cx="360.9" cy="456.6" rx="3" ry="2"/><ellipse cx="277" cy="447" rx="2" ry="2.5"/><ellipse cx="362" cy="509" rx="6" ry="4"/><ellipse cx="350" cy="468" rx="3" ry="2"/></g>
</svg><div class="a" style="left:340px;top:473px;width:50px;height:2px;background:#fff;box-shadow:0 1px 0 rgba(40,0,0,.5)"></div><div class="t" style="left:381px;top:718px;font-family:'Liberation Serif',serif;font-size:127px;color:#fff;transform-origin:5px 0;transform:translateX(-5px) scaleX(0.68);text-shadow:-1.5px 1.5px 1px rgba(30,0,0,.85)">C</div><div class="t" style="left:343px;top:473px;font-family:'Liberation Serif',serif;font-size:127px;color:#fff;transform-origin:4px 0;transform:translateX(-4px) scaleX(0.61);text-shadow:-1.5px 1.5px 1px rgba(30,0,0,.85)">F</div><div class="t" style="left:343px;top:594px;font-family:'Liberation Serif',serif;font-size:127px;color:#fff;transform-origin:4px 0;transform:translateX(-4px) scaleX(0.56);text-shadow:-1.5px 1.5px 1px rgba(30,0,0,.85)">E</div><div class="t" style="left:343px;top:716px;font-family:'Liberation Serif',serif;font-size:127px;color:#fff;transform-origin:9px 0;transform:translateX(-9px) scaleX(0.59);text-shadow:-1.5px 1.5px 1px rgba(30,0,0,.85)">S</div><div class="t" style="left:342px;top:839px;font-family:'Liberation Serif',serif;font-size:127px;color:#fff;transform-origin:5px 0;transform:translateX(-5px) scaleX(0.68);text-shadow:-1.5px 1.5px 1px rgba(30,0,0,.85)">C</div><div class="a" style="left:0;top:961px;width:1213px;height:10px;background:#f0f0f0"></div><div class="a" style="left:0;top:962px;width:1213px;height:1px;background:#a8a8a8"></div><div class="a" style="left:0;top:963px;width:1213px;height:1px;background:#fafafa"></div><div class="a" style="left:384px;top:48px;width:838px;height:932px;border:1px solid rgba(30,20,28,.9);border-radius:6px 6px 0 0;background:#eaf7fb;box-shadow:-2px 0 4px rgba(0,0,0,.35)"></div><div class="a" style="left:386px;top:49px;width:828px;height:28px;overflow:hidden;border-radius:5px 0 0 0"><div class="a" style="left:11px;top:-7px;width:40px;height:20px;background:radial-gradient(ellipse 16.0px 8.0px at center,rgba(150,195,240,.35),transparent)"></div><div class="a" style="left:44px;top:-7px;width:32px;height:20px;background:radial-gradient(ellipse 12.8px 8.0px at center,rgba(150,195,240,.3),transparent)"></div><div class="a" style="left:69px;top:-7px;width:32px;height:20px;background:radial-gradient(ellipse 12.8px 8.0px at center,rgba(150,195,240,.3),transparent)"></div><div class="a" style="left:97px;top:-9px;width:40px;height:24px;background:radial-gradient(ellipse 16.0px 9.600000000000001px at center,rgba(150,195,240,.4),transparent)"></div><div class="a" style="left:138px;top:-7px;width:32px;height:20px;background:radial-gradient(ellipse 12.8px 8.0px at center,rgba(150,195,240,.3),transparent)"></div><div class="a" style="left:170px;top:-11px;width:36px;height:32px;background:radial-gradient(ellipse 14.4px 12.8px at center,rgba(110,175,240,.55),transparent)"></div><div class="a" style="left:199px;top:-5px;width:20px;height:16px;background:radial-gradient(ellipse 8.0px 6.4px at center,rgba(120,170,230,.45),transparent)"></div><div class="a" style="left:215px;top:-11px;width:36px;height:32px;background:radial-gradient(ellipse 14.4px 12.8px at center,rgba(110,175,240,.55),transparent)"></div><div class="a" style="left:242px;top:-5px;width:20px;height:16px;background:radial-gradient(ellipse 8.0px 6.4px at center,rgba(120,170,230,.4),transparent)"></div><div class="a" style="left:253px;top:-11px;width:68px;height:40px;background:radial-gradient(ellipse 27.200000000000003px 16.0px at center,rgba(140,185,230,.45),transparent)"></div><div class="a" style="left:289px;top:-10px;width:56px;height:32px;background:radial-gradient(ellipse 22.400000000000002px 12.8px at center,rgba(120,175,230,.45),transparent)"></div><div class="a" style="left:321px;top:-11px;width:68px;height:40px;background:radial-gradient(ellipse 27.200000000000003px 16.0px at center,rgba(140,185,230,.45),transparent)"></div><div class="a" style="left:370px;top:-9px;width:36px;height:28px;background:radial-gradient(ellipse 14.4px 11.200000000000001px at center,rgba(200,120,130,.5),transparent)"></div><div class="a" style="left:399px;top:-9px;width:40px;height:32px;background:radial-gradient(ellipse 16.0px 12.8px at center,rgba(80,140,220,.65),transparent)"></div><div class="a" style="left:434px;top:-7px;width:12px;height:28px;background:radial-gradient(ellipse 4.800000000000001px 11.200000000000001px at center,rgba(90,150,220,.5),transparent)"></div><div class="a" style="left:442px;top:-6px;width:20px;height:24px;background:radial-gradient(ellipse 8.0px 9.600000000000001px at center,rgba(220,200,120,.45),transparent)"></div><div class="a" style="left:456px;top:-8px;width:48px;height:28px;background:radial-gradient(ellipse 19.200000000000003px 11.200000000000001px at center,rgba(170,180,170,.45),transparent)"></div><div class="a" style="left:501px;top:-12px;width:40px;height:36px;background:radial-gradient(ellipse 16.0px 14.4px at center,rgba(70,150,235,.8),transparent)"></div><div class="a" style="left:534px;top:-4px;width:20px;height:16px;background:radial-gradient(ellipse 8.0px 6.4px at center,rgba(120,170,230,.4),transparent)"></div><div class="a" style="left:548px;top:-6px;width:56px;height:20px;background:radial-gradient(ellipse 22.400000000000002px 8.0px at center,rgba(120,150,200,.55),transparent)"></div><div class="a" style="left:593px;top:-4px;width:24px;height:12px;background:radial-gradient(ellipse 9.600000000000001px 4.800000000000001px at center,rgba(120,170,230,.35),transparent)"></div><div class="a" style="left:711px;top:-7px;width:48px;height:20px;background:radial-gradient(ellipse 19.200000000000003px 8.0px at center,rgba(140,180,225,.35),transparent)"></div></div><div class="a" style="left:386px;top:63px;width:828px;height:14px;background:linear-gradient(180deg,rgba(238,251,253,0),rgba(238,251,253,.7))"></div><div class="a" style="left:385px;top:77px;width:7px;height:894px;background:linear-gradient(180deg,#eef9fc 0px,#e6f3f8 14px,#8e969e 26px,#4a5058 36px,#30343c 120px,#2e323a 290px,#3a2c34 310px,#6a2434 325px,#962a42 345px,#982840 894px)"></div><div class="a" style="left:385px;top:516px;width:7px;height:44px;background:radial-gradient(ellipse 8px 22.0px at 50% 50%,rgba(235,238,255,1),rgba(235,238,255,1) 30%,rgba(225,230,250,0))"></div><div class="a" style="left:385px;top:611px;width:7px;height:16px;background:radial-gradient(ellipse 8px 8.0px at 50% 50%,rgba(235,238,255,0.8),rgba(235,238,255,0.8) 30%,rgba(225,230,250,0))"></div><div class="a" style="left:385px;top:755px;width:7px;height:64px;background:radial-gradient(ellipse 8px 32.0px at 50% 50%,rgba(235,238,255,1),rgba(235,238,255,1) 30%,rgba(225,230,250,0))"></div><div class="a" style="left:385px;top:857px;width:7px;height:22px;background:radial-gradient(ellipse 8px 11.0px at 50% 50%,rgba(235,238,255,1),rgba(235,238,255,1) 30%,rgba(225,230,250,0))"></div><div class="a" style="left:385px;top:938px;width:7px;height:22px;background:radial-gradient(ellipse 8px 11.0px at 50% 50%,rgba(235,238,255,1),rgba(235,238,255,1) 30%,rgba(225,230,250,0))"></div><div class="a" style="left:385px;top:958px;width:6px;height:13px;background:linear-gradient(rgba(215,215,230,0),#d8dae4 4px)"></div><div class="a" style="left:385px;top:77px;width:1px;height:894px;background:rgba(255,255,255,.6)"></div><div class="a" style="left:390px;top:77px;width:1px;height:894px;background:rgba(255,255,255,.55)"></div><svg style="left:391px;top:55px" width="18" height="16" viewBox="391 55 18 16"><rect x="395.5" y="56.5" width="12" height="10" rx="1" fill="#d6d6d6" stroke="#b8b8b8"/><rect x="397" y="58" width="9" height="7" fill="#050505"/><path d="M397 61.5 L399.5 59 L403 63.5 L406 61.5" stroke="#22e022" fill="none" stroke-width="1.3"/><path d="M399 67.5 H404 L405.5 69.5 H397.5 Z" fill="#c8c8c8" stroke="#a8a8a8" stroke-width=".6"/><rect x="392.3" y="60.5" width="2.7" height="9.5" rx="1" fill="#d0d0d0" stroke="#9a9a9a" stroke-width=".6"/><rect x="392.6" y="61.6" width="2" height="1.6" fill="#2de02d"/></svg><div class="t" style="left:413px;top:57px;font-size:12px;color:#000;-webkit-text-stroke:0;text-shadow:0 0 8px #fff,0 0 5px #fff">Диспетчер задач Windows</div><div class="a" style="left:1131px;top:48px;width:100px;height:20px;border:1px solid #8d949c;border-top:none;border-radius:0 0 0 5px;background:linear-gradient(#f0fbfd,#e8f7fb)"></div><div class="a" style="left:1131px;top:48px;width:28px;height:20px;border-radius:0 0 0 5px;background:radial-gradient(ellipse at 60% 30%,rgba(160,200,240,.45),transparent 60%)"></div><div class="a" style="left:1159px;top:48px;width:1px;height:19px;background:#a9b2b9"></div><div class="a" style="left:1186px;top:48px;width:1px;height:19px;background:#a9b2b9"></div><div class="a" style="left:1140px;top:58px;width:12px;height:5px;border:1px solid #3c434c;background:linear-gradient(#fff,#e4e4e4);border-radius:1px"></div><div class="a" style="left:1167px;top:53px;width:12px;height:10px;border:1px solid #3c434c;background:linear-gradient(#fff,#e8e8e8);border-radius:1px"></div><div class="a" style="left:1170px;top:56px;width:6px;height:4px;border:1px solid #3c434c;background:#fff"></div><svg style="left:1205px;top:53px" width="14" height="11"><path d="M1.5 1.5 L11 9.5 M11 1.5 L1.5 9.5" stroke="#3c434c" stroke-width="3.4" stroke-linecap="round"/><path d="M1.5 1.5 L11 9.5 M11 1.5 L1.5 9.5" stroke="#f4f4f4" stroke-width="1.4"/></svg><div class="a" style="left:391px;top:77px;width:830px;height:900px;background:#f0f0f0;background-clip:padding-box;border:1px solid rgba(25,15,20,.58);border-right:none;border-bottom:none"></div><div class="a" style="left:392px;top:96px;width:1px;height:880px;background:#fbfbfb"></div><div class="a" style="left:392px;top:78px;width:830px;height:19px;background:linear-gradient(180deg,#fefefe 0%,#f0f2f8 30%,#e6eaf5 40%,#d6dcef 41%,#dae0f2 100%);border-bottom:1px solid #b4bcd2"></div><div class="t" style="left:399px;top:83px;font-size:11.5px;color:#857e78;-webkit-text-stroke:0">Файл</div><div class="t" style="left:442px;top:83px;font-size:11.5px;color:#857e78;-webkit-text-stroke:0">Параметры</div><div class="t" style="left:519px;top:83px;font-size:11.5px;color:#857e78;-webkit-text-stroke:0">Вид</div><div class="t" style="left:554px;top:83px;font-size:11.5px;color:#857e78;-webkit-text-stroke:0">Справка</div><div class="a" style="left:397px;top:123px;width:830px;height:860px;background:#fff;border:1px solid #898c95;border-right:none;border-bottom:none"></div><div class="a" style="left:399px;top:105px;width:74px;height:18px;background:linear-gradient(#f3f3f3,#ebebeb 45%,#dedede 55%,#d6d6d6);border:1px solid #898c95;border-bottom:none;border-radius:2px 2px 0 0;box-shadow:inset 1px 1px 0 #fff"></div><div class="t" style="left:399px;width:74px;text-align:center;top:110px;font-size:11px;color:#000">Приложения</div><div class="a" style="left:472px;top:103px;width:65px;height:21px;background:#fff;border:1px solid #898c95;border-bottom:none;border-radius:2px 2px 0 0"></div><div class="t" style="left:472px;width:65px;text-align:center;top:108px;font-size:11px;color:#000">Процессы</div><div class="a" style="left:537px;top:105px;width:51px;height:18px;background:linear-gradient(#f3f3f3,#ebebeb 45%,#dedede 55%,#d6d6d6);border:1px solid #898c95;border-bottom:none;border-radius:2px 2px 0 0;box-shadow:inset 1px 1px 0 #fff"></div><div class="t" style="left:537px;width:51px;text-align:center;top:110px;font-size:11px;color:#000">Службы</div><div class="a" style="left:589px;top:105px;width:96px;height:18px;background:linear-gradient(#f3f3f3,#ebebeb 45%,#dedede 55%,#d6d6d6);border:1px solid #898c95;border-bottom:none;border-radius:2px 2px 0 0;box-shadow:inset 1px 1px 0 #fff"></div><div class="t" style="left:589px;width:96px;text-align:center;top:110px;font-size:11px;color:#000">Быстродействие</div><div class="a" style="left:686px;top:105px;width:41px;height:18px;background:linear-gradient(#f3f3f3,#ebebeb 45%,#dedede 55%,#d6d6d6);border:1px solid #898c95;border-bottom:none;border-radius:2px 2px 0 0;box-shadow:inset 1px 1px 0 #fff"></div><div class="t" style="left:686px;width:41px;text-align:center;top:110px;font-size:11px;color:#000">Сеть</div><div class="a" style="left:728px;top:105px;width:82px;height:18px;background:linear-gradient(#f3f3f3,#ebebeb 45%,#dedede 55%,#d6d6d6);border:1px solid #898c95;border-bottom:none;border-radius:2px 2px 0 0;box-shadow:inset 1px 1px 0 #fff"></div><div class="t" style="left:728px;width:82px;text-align:center;top:110px;font-size:11px;color:#000">Пользователи</div><div class="a" style="left:415px;top:140px;width:797px;height:788px;background:#fff;border:1px solid #828790;overflow:hidden"><div class="a" style="left:0;top:0;width:800px;height:24px;background:linear-gradient(180deg,#fff 0%,#fff 40%,#f7f8fa 41%,#f1f2f4 100%);border-bottom:1px solid #d5d5d5"></div><div class="a" style="left:0;top:0;width:179px;height:24px;background:linear-gradient(180deg,#f2f9fc 0%,#f2f9fc 40%,#e1f1f9 41%,#d8ecf6 100%);border-right:1px solid #96d9f9;border-bottom:1px solid #96d9f9;border-left:1px solid #c0e6f8;border-top:1px solid #e4f3fa"></div><svg style="left:86px;top:1px" width="9" height="6"><path d="M1 5 L4.5 1.5 L8 5" fill="#b8d4ea" stroke="#4f7fa8" stroke-width="1.1"/></svg><div class="a" style="left:267px;top:0;width:1px;height:24px;background:linear-gradient(#fff,#e3e8ee)"></div><div class="a" style="left:268px;top:0;width:1px;height:24px;background:#fff"></div><div class="a" style="left:300px;top:0;width:1px;height:24px;background:linear-gradient(#fff,#e3e8ee)"></div><div class="a" style="left:301px;top:0;width:1px;height:24px;background:#fff"></div><div class="a" style="left:491px;top:0;width:1px;height:24px;background:linear-gradient(#fff,#e3e8ee)"></div><div class="a" style="left:492px;top:0;width:1px;height:24px;background:#fff"></div><div class="a" style="left:613px;top:0;width:1px;height:24px;background:linear-gradient(#fff,#e3e8ee)"></div><div class="a" style="left:614px;top:0;width:1px;height:24px;background:#fff"></div><div class="a" style="left:735px;top:0;width:1px;height:24px;background:linear-gradient(#fff,#e3e8ee)"></div><div class="a" style="left:736px;top:0;width:1px;height:24px;background:#fff"></div><div class="t" style="left:6px;top:8px;font-size:11px;color:#000">Имя образа</div><div class="t" style="left:184px;top:8px;font-size:11px;color:#000">Пользователь</div><div class="t" style="right:499px;top:8px;font-size:11px;color:#000">ЦП</div><div class="t" style="left:316px;top:8px;font-size:11px;color:#000">Память (частный рабочий набор)</div><div class="t" style="right:186px;top:8px;font-size:11px;color:#000">Ошибки страниц</div><div class="t" style="left:620px;top:8px;font-size:11px;color:#000">Описание</div><div class="a" style="left:178px;top:25px;width:1px;height:800px;background:#eef3fb"></div><div class="a" style="left:268px;top:25px;width:1px;height:800px;background:#eef3fb"></div><div class="a" style="left:301px;top:25px;width:1px;height:800px;background:#eef3fb"></div><div class="a" style="left:492px;top:25px;width:1px;height:800px;background:#eef3fb"></div><div class="a" style="left:614px;top:25px;width:1px;height:800px;background:#eef3fb"></div><div class="a" style="left:736px;top:25px;width:1px;height:800px;background:#eef3fb"></div><div class="a" style="left:1px;top:246px;width:736px;height:17px;background:linear-gradient(#fbfbfb,#ececec 60%,#e4e4e4);border:1px solid #d5d5d5;border-radius:3px"></div><div class="t" style="left:6px;top:29px;font-size:11px">atieclxx.exe</div><div class="t" style="left:184px;top:29px;font-size:11px">система</div><div class="t" style="left:278px;top:29px;font-size:11px">00</div><div class="t" style="right:309px;top:29px;font-size:11px">2 092 КБ</div><div class="t" style="right:188px;top:29px;font-size:11px">1 792</div><div class="t" style="left:621px;top:29px;font-size:11px">AMD External Event...</div><div class="t" style="left:6px;top:46px;font-size:11px">atiesrxx.exe</div><div class="t" style="left:184px;top:46px;font-size:11px">система</div><div class="t" style="left:278px;top:46px;font-size:11px">00</div><div class="t" style="right:309px;top:46px;font-size:11px">1 252 КБ</div><div class="t" style="right:188px;top:46px;font-size:11px">1 073</div><div class="t" style="left:621px;top:46px;font-size:11px">AMD External Event...</div><div class="t" style="left:6px;top:63px;font-size:11px">audiodg.exe</div><div class="t" style="left:184px;top:63px;font-size:11px">LOCAL SERVI...</div><div class="t" style="left:278px;top:63px;font-size:11px">00</div><div class="t" style="right:309px;top:63px;font-size:11px">10 836 КБ</div><div class="t" style="right:188px;top:63px;font-size:11px">4 831</div><div class="t" style="left:621px;top:63px;font-size:11px">Изоляция графов ...</div><div class="t" style="left:6px;top:80px;font-size:11px">cfp.exe</div><div class="t" style="left:184px;top:80px;font-size:11px">Andrew</div><div class="t" style="left:278px;top:80px;font-size:11px">00</div><div class="t" style="right:309px;top:80px;font-size:11px">3 908 КБ</div><div class="t" style="right:188px;top:80px;font-size:11px">12 706 590</div><div class="t" style="left:621px;top:80px;font-size:11px">COMODO Internet ...</div><div class="t" style="left:6px;top:97px;font-size:11px">cmdagent.exe</div><div class="t" style="left:184px;top:97px;font-size:11px">система</div><div class="t" style="left:278px;top:97px;font-size:11px">01</div><div class="t" style="right:309px;top:97px;font-size:11px">2 412 КБ</div><div class="t" style="right:188px;top:97px;font-size:11px">290 618</div><div class="t" style="left:621px;top:97px;font-size:11px">COMODO Internet ...</div><div class="t" style="left:6px;top:114px;font-size:11px">csrss.exe</div><div class="t" style="left:184px;top:114px;font-size:11px">система</div><div class="t" style="left:278px;top:114px;font-size:11px">00</div><div class="t" style="right:309px;top:114px;font-size:11px">1 364 КБ</div><div class="t" style="right:188px;top:114px;font-size:11px">20 382</div><div class="t" style="left:621px;top:114px;font-size:11px">Процесс исполнен...</div><div class="t" style="left:6px;top:131px;font-size:11px">csrss.exe</div><div class="t" style="left:184px;top:131px;font-size:11px">система</div><div class="t" style="left:278px;top:131px;font-size:11px">00</div><div class="t" style="right:309px;top:131px;font-size:11px">1 396 КБ</div><div class="t" style="right:188px;top:131px;font-size:11px">82 642</div><div class="t" style="left:621px;top:131px;font-size:11px">Процесс исполнен...</div><div class="t" style="left:6px;top:148px;font-size:11px">dwm.exe</div><div class="t" style="left:184px;top:148px;font-size:11px">Andrew</div><div class="t" style="left:278px;top:148px;font-size:11px">00</div><div class="t" style="right:309px;top:148px;font-size:11px">24 488 КБ</div><div class="t" style="right:188px;top:148px;font-size:11px">100 514</div><div class="t" style="left:621px;top:148px;font-size:11px">Диспетчер окон р...</div><div class="t" style="left:6px;top:165px;font-size:11px">egui.exe</div><div class="t" style="left:184px;top:165px;font-size:11px">Andrew</div><div class="t" style="left:278px;top:165px;font-size:11px">00</div><div class="t" style="right:309px;top:165px;font-size:11px">2 836 КБ</div><div class="t" style="right:188px;top:165px;font-size:11px">3 187</div><div class="t" style="left:621px;top:165px;font-size:11px">ESET GUI</div><div class="t" style="left:6px;top:182px;font-size:11px">EHttpSrv.exe</div><div class="t" style="left:184px;top:182px;font-size:11px">NETWORK S...</div><div class="t" style="left:278px;top:182px;font-size:11px">00</div><div class="t" style="right:309px;top:182px;font-size:11px">1 868 КБ</div><div class="t" style="right:188px;top:182px;font-size:11px">22 025</div><div class="t" style="left:621px;top:182px;font-size:11px">ESET HTTP Server S...</div><div class="t" style="left:6px;top:199px;font-size:11px">ekrn.exe</div><div class="t" style="left:184px;top:199px;font-size:11px">система</div><div class="t" style="left:278px;top:199px;font-size:11px">01</div><div class="t" style="right:309px;top:199px;font-size:11px">80 912 КБ</div><div class="t" style="right:188px;top:199px;font-size:11px">4 172 497</div><div class="t" style="left:621px;top:199px;font-size:11px">ESET Service</div><div class="t" style="left:6px;top:216px;font-size:11px">explorer.exe</div><div class="t" style="left:184px;top:216px;font-size:11px">Andrew</div><div class="t" style="left:278px;top:216px;font-size:11px">02</div><div class="t" style="right:309px;top:216px;font-size:11px">31 248 КБ</div><div class="t" style="right:188px;top:216px;font-size:11px">404 107</div><div class="t" style="left:621px;top:216px;font-size:11px">Проводник</div><div class="t" style="left:6px;top:233px;font-size:11px">FlylinkDC.exe</div><div class="t" style="left:184px;top:233px;font-size:11px">Andrew</div><div class="t" style="left:278px;top:233px;font-size:11px">00</div><div class="t" style="right:309px;top:233px;font-size:11px">28 420 КБ</div><div class="t" style="right:188px;top:233px;font-size:11px">172 350</div><div class="t" style="left:621px;top:233px;font-size:11px">FlylinkDC++</div><div class="t" style="left:6px;top:250px;font-size:11px">FOXITR~1.EXE</div><div class="t" style="left:184px;top:250px;font-size:11px">Andrew</div><div class="t" style="left:278px;top:250px;font-size:11px">01</div><div class="t" style="right:309px;top:250px;font-size:11px">15 316 КБ</div><div class="t" style="right:188px;top:250px;font-size:11px">7 034</div><div class="t" style="left:621px;top:250px;font-size:11px">Foxit Reader, Best ...</div><div class="t" style="left:6px;top:267px;font-size:11px">lsass.exe</div><div class="t" style="left:184px;top:267px;font-size:11px">система</div><div class="t" style="left:278px;top:267px;font-size:11px">00</div><div class="t" style="right:309px;top:267px;font-size:11px">3 684 КБ</div><div class="t" style="right:188px;top:267px;font-size:11px">5 131</div><div class="t" style="left:621px;top:267px;font-size:11px">Local Security Auth...</div><div class="t" style="left:6px;top:284px;font-size:11px">lsm.exe</div><div class="t" style="left:184px;top:284px;font-size:11px">система</div><div class="t" style="left:278px;top:284px;font-size:11px">00</div><div class="t" style="right:309px;top:284px;font-size:11px">1 612 КБ</div><div class="t" style="right:188px;top:284px;font-size:11px">3 405</div><div class="t" style="left:621px;top:284px;font-size:11px">Служба диспетчер...</div><div class="t" style="left:6px;top:301px;font-size:11px">opera.exe</div><div class="t" style="left:184px;top:301px;font-size:11px">Andrew</div><div class="t" style="left:278px;top:301px;font-size:11px">00</div><div class="t" style="right:309px;top:301px;font-size:11px">174 508 КБ</div><div class="t" style="right:188px;top:301px;font-size:11px">264 698</div><div class="t" style="left:621px;top:301px;font-size:11px">Opera Internet Bro...</div><div class="t" style="left:6px;top:318px;font-size:11px">services.exe</div><div class="t" style="left:184px;top:318px;font-size:11px">система</div><div class="t" style="left:278px;top:318px;font-size:11px">00</div><div class="t" style="right:309px;top:318px;font-size:11px">4 236 КБ</div><div class="t" style="right:188px;top:318px;font-size:11px">11 257</div><div class="t" style="left:621px;top:318px;font-size:11px">Приложение служ...</div><div class="t" style="left:6px;top:335px;font-size:11px">sidebar.exe</div><div class="t" style="left:184px;top:335px;font-size:11px">Andrew</div><div class="t" style="left:278px;top:335px;font-size:11px">00</div><div class="t" style="right:309px;top:335px;font-size:11px">7 156 КБ</div><div class="t" style="right:188px;top:335px;font-size:11px">22 927</div><div class="t" style="left:621px;top:335px;font-size:11px">Гаджеты рабочег...</div><div class="t" style="left:6px;top:352px;font-size:11px">smss.exe</div><div class="t" style="left:184px;top:352px;font-size:11px">система</div><div class="t" style="left:278px;top:352px;font-size:11px">00</div><div class="t" style="right:309px;top:352px;font-size:11px">348 КБ</div><div class="t" style="right:188px;top:352px;font-size:11px">362</div><div class="t" style="left:621px;top:352px;font-size:11px">Диспетчер сеанса ...</div><div class="t" style="left:6px;top:369px;font-size:11px">SnippingTool.exe</div><div class="t" style="left:184px;top:369px;font-size:11px">Andrew</div><div class="t" style="left:278px;top:369px;font-size:11px">01</div><div class="t" style="right:309px;top:369px;font-size:11px">2 084 КБ</div><div class="t" style="right:188px;top:369px;font-size:11px">1 953</div><div class="t" style="left:621px;top:369px;font-size:11px"></div><div class="t" style="left:6px;top:386px;font-size:11px">svchost.exe</div><div class="t" style="left:184px;top:386px;font-size:11px">система</div><div class="t" style="left:278px;top:386px;font-size:11px">00</div><div class="t" style="right:309px;top:386px;font-size:11px">3 556 КБ</div><div class="t" style="right:188px;top:386px;font-size:11px">5 981</div><div class="t" style="left:621px;top:386px;font-size:11px">Хост-процесс для ...</div><div class="t" style="left:6px;top:403px;font-size:11px">svchost.exe</div><div class="t" style="left:184px;top:403px;font-size:11px">NETWORK S...</div><div class="t" style="left:278px;top:403px;font-size:11px">00</div><div class="t" style="right:309px;top:403px;font-size:11px">3 312 КБ</div><div class="t" style="right:188px;top:403px;font-size:11px">4 054</div><div class="t" style="left:621px;top:403px;font-size:11px">Хост-процесс для ...</div><div class="t" style="left:6px;top:420px;font-size:11px">svchost.exe</div><div class="t" style="left:184px;top:420px;font-size:11px">NETWORK S...</div><div class="t" style="left:278px;top:420px;font-size:11px">00</div><div class="t" style="right:309px;top:420px;font-size:11px">6 176 КБ</div><div class="t" style="right:188px;top:420px;font-size:11px">9 733</div><div class="t" style="left:621px;top:420px;font-size:11px">Хост-процесс для ...</div><div class="t" style="left:6px;top:437px;font-size:11px">svchost.exe</div><div class="t" style="left:184px;top:437px;font-size:11px">LOCAL SERVI...</div><div class="t" style="left:278px;top:437px;font-size:11px">00</div><div class="t" style="right:309px;top:437px;font-size:11px">8 728 КБ</div><div class="t" style="right:188px;top:437px;font-size:11px">18 763</div><div class="t" style="left:621px;top:437px;font-size:11px">Хост-процесс для ...</div><div class="t" style="left:6px;top:454px;font-size:11px">svchost.exe</div><div class="t" style="left:184px;top:454px;font-size:11px">LOCAL SERVI...</div><div class="t" style="left:278px;top:454px;font-size:11px">00</div><div class="t" style="right:309px;top:454px;font-size:11px">2 844 КБ</div><div class="t" style="right:188px;top:454px;font-size:11px">4 119</div><div class="t" style="left:621px;top:454px;font-size:11px">Хост-процесс для ...</div><div class="t" style="left:6px;top:471px;font-size:11px">svchost.exe</div><div class="t" style="left:184px;top:471px;font-size:11px">система</div><div class="t" style="left:278px;top:471px;font-size:11px">00</div><div class="t" style="right:309px;top:471px;font-size:11px">4 772 КБ</div><div class="t" style="right:188px;top:471px;font-size:11px">8 155</div><div class="t" style="left:621px;top:471px;font-size:11px">Хост-процесс для ...</div><div class="t" style="left:6px;top:488px;font-size:11px">svchost.exe</div><div class="t" style="left:184px;top:488px;font-size:11px">система</div><div class="t" style="left:278px;top:488px;font-size:11px">00</div><div class="t" style="right:309px;top:488px;font-size:11px">18 868 КБ</div><div class="t" style="right:188px;top:488px;font-size:11px">299 279</div><div class="t" style="left:621px;top:488px;font-size:11px">Хост-процесс для ...</div><div class="t" style="left:6px;top:505px;font-size:11px">svchost.exe</div><div class="t" style="left:184px;top:505px;font-size:11px">система</div><div class="t" style="left:278px;top:505px;font-size:11px">00</div><div class="t" style="right:309px;top:505px;font-size:11px">2 244 КБ</div><div class="t" style="right:188px;top:505px;font-size:11px">1 942</div><div class="t" style="left:621px;top:505px;font-size:11px">Хост-процесс для ...</div><div class="t" style="left:6px;top:522px;font-size:11px">svchost.exe</div><div class="t" style="left:184px;top:522px;font-size:11px">LOCAL SERVI...</div><div class="t" style="left:278px;top:522px;font-size:11px">00</div><div class="t" style="right:309px;top:522px;font-size:11px">4 160 КБ</div><div class="t" style="right:188px;top:522px;font-size:11px">9 052</div><div class="t" style="left:621px;top:522px;font-size:11px">Хост-процесс для ...</div><div class="t" style="left:6px;top:539px;font-size:11px">svchost.exe</div><div class="t" style="left:184px;top:539px;font-size:11px">LOCAL SERVI...</div><div class="t" style="left:278px;top:539px;font-size:11px">00</div><div class="t" style="right:309px;top:539px;font-size:11px">3 904 КБ</div><div class="t" style="right:188px;top:539px;font-size:11px">33 595</div><div class="t" style="left:621px;top:539px;font-size:11px">Хост-процесс для ...</div><div class="t" style="left:6px;top:556px;font-size:11px">svchost.exe</div><div class="t" style="left:184px;top:556px;font-size:11px">NETWORK S...</div><div class="t" style="left:278px;top:556px;font-size:11px">00</div><div class="t" style="right:309px;top:556px;font-size:11px">1 796 КБ</div><div class="t" style="right:188px;top:556px;font-size:11px">1 494</div><div class="t" style="left:621px;top:556px;font-size:11px">Хост-процесс для ...</div><div class="t" style="left:6px;top:573px;font-size:11px">System</div><div class="t" style="left:184px;top:573px;font-size:11px">система</div><div class="t" style="left:278px;top:573px;font-size:11px">00</div><div class="t" style="right:309px;top:573px;font-size:11px">40 КБ</div><div class="t" style="right:188px;top:573px;font-size:11px">30 005</div><div class="t" style="left:621px;top:573px;font-size:11px">NT Kernel &amp; System</div><div class="t" style="left:6px;top:590px;font-size:11px">taskhost.exe</div><div class="t" style="left:184px;top:590px;font-size:11px">Andrew</div><div class="t" style="left:278px;top:590px;font-size:11px">00</div><div class="t" style="right:309px;top:590px;font-size:11px">2 920 КБ</div><div class="t" style="right:188px;top:590px;font-size:11px">3 438</div><div class="t" style="left:621px;top:590px;font-size:11px">Хост-процесс для ...</div><div class="t" style="left:6px;top:607px;font-size:11px">taskmgr.exe</div><div class="t" style="left:184px;top:607px;font-size:11px">Andrew</div><div class="t" style="left:278px;top:607px;font-size:11px">01</div><div class="t" style="right:309px;top:607px;font-size:11px">2 724 КБ</div><div class="t" style="right:188px;top:607px;font-size:11px">2 816</div><div class="t" style="left:621px;top:607px;font-size:11px">Диспетчер задач ...</div><div class="t" style="left:6px;top:624px;font-size:11px">uTorrent.exe</div><div class="t" style="left:184px;top:624px;font-size:11px">Andrew</div><div class="t" style="left:278px;top:624px;font-size:11px">04</div><div class="t" style="right:309px;top:624px;font-size:11px">50 372 КБ</div><div class="t" style="right:188px;top:624px;font-size:11px">1 780 348</div><div class="t" style="left:621px;top:624px;font-size:11px">µTorrent</div><div class="t" style="left:6px;top:641px;font-size:11px">vmnat.exe</div><div class="t" style="left:184px;top:641px;font-size:11px">система</div><div class="t" style="left:278px;top:641px;font-size:11px">00</div><div class="t" style="right:309px;top:641px;font-size:11px">1 812 КБ</div><div class="t" style="right:188px;top:641px;font-size:11px">1 225</div><div class="t" style="left:621px;top:641px;font-size:11px">VMware NAT Service</div><div class="t" style="left:6px;top:658px;font-size:11px">vmnetdhcp.exe</div><div class="t" style="left:184px;top:658px;font-size:11px">система</div><div class="t" style="left:278px;top:658px;font-size:11px">00</div><div class="t" style="right:309px;top:658px;font-size:11px">1 432 КБ</div><div class="t" style="right:188px;top:658px;font-size:11px">1 033</div><div class="t" style="left:621px;top:658px;font-size:11px">VMware VMnet DHC...</div><div class="t" style="left:6px;top:675px;font-size:11px">vmware-authd.exe</div><div class="t" style="left:184px;top:675px;font-size:11px">система</div><div class="t" style="left:278px;top:675px;font-size:11px">00</div><div class="t" style="right:309px;top:675px;font-size:11px">3 284 КБ</div><div class="t" style="right:188px;top:675px;font-size:11px">5 030</div><div class="t" style="left:621px;top:675px;font-size:11px">VMware Authorizati...</div><div class="t" style="left:6px;top:692px;font-size:11px">vmware-hostd.exe</div><div class="t" style="left:184px;top:692px;font-size:11px">система</div><div class="t" style="left:278px;top:692px;font-size:11px">00</div><div class="t" style="right:309px;top:692px;font-size:11px">26 120 КБ</div><div class="t" style="right:188px;top:692px;font-size:11px">220 933</div><div class="t" style="left:621px;top:692px;font-size:11px">vmware-hostd.exe</div><div class="t" style="left:6px;top:709px;font-size:11px">vmware-usbarbitrator.exe</div><div class="t" style="left:184px;top:709px;font-size:11px">система</div><div class="t" style="left:278px;top:709px;font-size:11px">00</div><div class="t" style="right:309px;top:709px;font-size:11px">2 380 КБ</div><div class="t" style="right:188px;top:709px;font-size:11px">2 281</div><div class="t" style="left:621px;top:709px;font-size:11px">VMware USB Arbitra...</div><div class="t" style="left:6px;top:726px;font-size:11px">wininit.exe</div><div class="t" style="left:184px;top:726px;font-size:11px">система</div><div class="t" style="left:278px;top:726px;font-size:11px">00</div><div class="t" style="right:309px;top:726px;font-size:11px">1 416 КБ</div><div class="t" style="right:188px;top:726px;font-size:11px">1 374</div><div class="t" style="left:621px;top:726px;font-size:11px">Автозагрузка при...</div><div class="t" style="left:6px;top:743px;font-size:11px">winlogon.exe</div><div class="t" style="left:184px;top:743px;font-size:11px">система</div><div class="t" style="left:278px;top:743px;font-size:11px">00</div><div class="t" style="right:309px;top:743px;font-size:11px">1 944 КБ</div><div class="t" style="right:188px;top:743px;font-size:11px">3 095</div><div class="t" style="left:621px;top:743px;font-size:11px">Программа входа ...</div><div class="t" style="left:6px;top:760px;font-size:11px">WmiPrvSE.exe</div><div class="t" style="left:184px;top:760px;font-size:11px">NETWORK S...</div><div class="t" style="left:278px;top:760px;font-size:11px">00</div><div class="t" style="right:309px;top:760px;font-size:11px">5 164 КБ</div><div class="t" style="right:188px;top:760px;font-size:11px">10 327</div><div class="t" style="left:621px;top:760px;font-size:11px">WMI Provider Host</div><div class="t" style="left:6px;top:777px;font-size:11px">Бездействие системы</div><div class="t" style="left:184px;top:777px;font-size:11px">система</div><div class="t" style="left:278px;top:777px;font-size:11px">90</div><div class="t" style="right:309px;top:777px;font-size:11px">24 КБ</div><div class="t" style="right:188px;top:777px;font-size:11px">0</div><div class="t" style="left:621px;top:777px;font-size:11px">Процент времени ...</div><div class="a" style="left:778px;top:0;width:17px;height:786px;background:linear-gradient(90deg,#e3e3e3,#f0f0f0 20%,#f0f0f0)"></div><svg style="left:783px;top:9px" width="8" height="5"><path d="M0 4.5 L4 .5 L8 4.5 Z" fill="#404040"/></svg><svg style="left:783px;top:775px" width="8" height="5"><path d="M0 .5 L4 4.5 L8 .5 Z" fill="#404040"/></svg><div class="a" style="left:778px;top:19px;width:15px;height:731px;border:1px solid #979797;border-radius:2px;background:linear-gradient(90deg,#f1f1f1,#e7e7e7 45%,#d4d4d4 55%,#cdcdcd)"></div><svg style="left:782px;top:380px" width="8" height="7"><path d="M0 .5 H7 M0 3.5 H7 M0 6.5 H7" stroke="#555"/></svg></div><svg style="left:0;top:0" width="1213" height="971"><path d="M411.5 387.5 H431.5 V385.5 H520.5 V384.5 H1105.5 V385.5 H1145.5 V386.5 H1162.5 V387.5 H1165.5 V402.5 H1159.5 V403.5 H1137.5 V404.5 H1089.5 V405.5 H481.5 V404.5 H438.5 V403.5 H417.5 V402.5 H411.5 Z" fill="none" stroke="#e3141c" stroke-width="1"/></svg><div class="a" style="left:416px;top:935px;width:13px;height:13px;border:1px solid #8e8f8f;background:#fff"></div><div class="a" style="left:418px;top:937px;width:9px;height:9px;background:linear-gradient(135deg,#cfd2d6,#eef0f2)"></div><svg style="left:416px;top:935px" width="13" height="13" viewBox="416 935 13 13"><path d="M419.2 941.2 L421.3 944.6 L425.8 937.6" stroke="#3f55a0" stroke-width="1.6" fill="none" stroke-linejoin="round"/></svg><div class="t" style="left:432px;top:937px;font-size:11px">Отображать процессы всех пользователей</div><div class="a" style="left:1084px;top:935px;width:127px;height:21px;border:1px solid #707070;border-radius:3px;background:linear-gradient(180deg,#f2f2f2 0%,#ebebeb 45%,#dddddd 50%,#cfcfcf 100%)"></div><div class="t" style="left:1097px;top:941px;font-size:11px">Завершить процесс</div>
</body></html>
